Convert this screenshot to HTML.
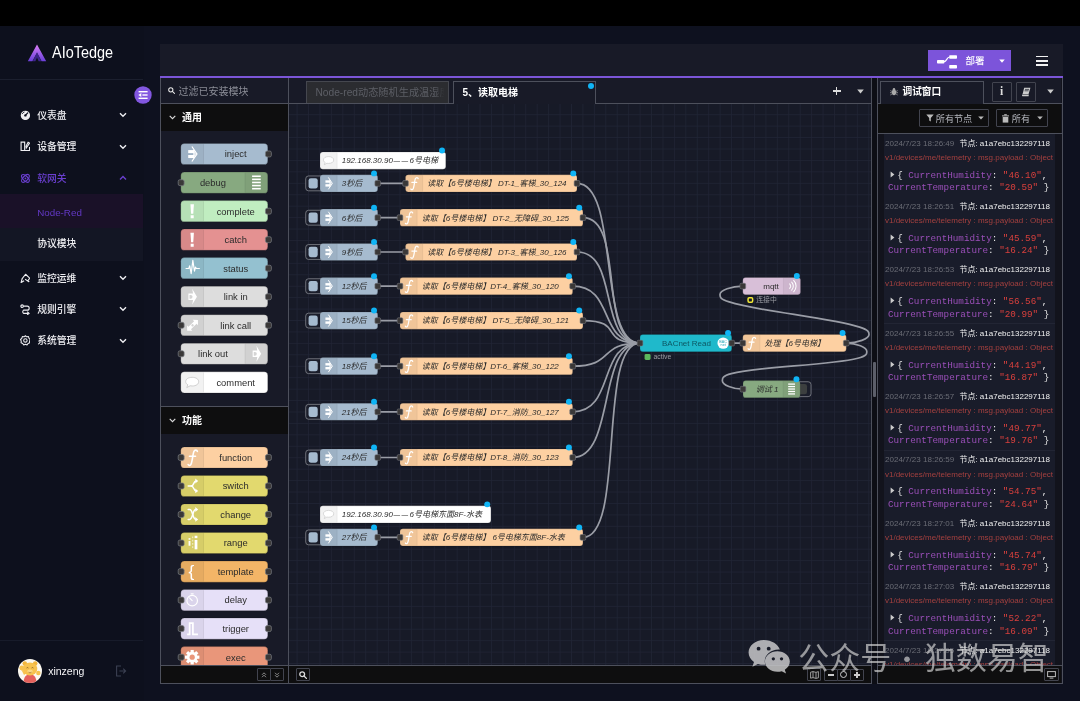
<!DOCTYPE html><html lang="zh"><head><meta charset="utf-8"><title>AIoTedge - Node-Red</title>
<style>
html,body{margin:0;padding:0}
body{width:1080px;height:701px;overflow:hidden;position:relative;background:#0e111f;font-family:"Liberation Sans","Noto Sans CJK SC",sans-serif;color:#fff}
.a{position:absolute}
.menu{position:absolute;left:0;width:143px;height:31px;font-size:9.8px;font-weight:500;color:#f1f1f4}
.menu span{position:absolute;left:37.2px;top:50%;margin-top:0.8px;transform:translateY(-50%);white-space:nowrap;line-height:14px}
.menu svg.ic{position:absolute;left:19.7px;top:50%;margin-top:-5.4px;width:10.8px;height:10.8px}
.menu svg.ch{position:absolute;left:119px;top:50%;margin-top:-3px}
.bd{background:#4d505c}
.cat{position:absolute;left:161px;width:127px;height:27px;background:#0e0e0f;font-size:10px;font-weight:700;color:#fff}
.cat span{position:absolute;left:21px;top:50%;margin-top:0.6px;transform:translateY(-50%);line-height:14px}
.msg{position:absolute;left:884px;width:171px;height:63px;background:#191c2a;font-size:8px;white-space:nowrap;overflow:hidden}
.msg .t{position:absolute;left:1px;top:4.9px;color:#6b6d76;line-height:10px;letter-spacing:0.02px}
.msg .n{position:absolute;right:5px;top:4.9px;color:#f0f0f0;line-height:10px}
.msg .p{position:absolute;left:1px;top:19.1px;color:#a4403f;line-height:10px}
.msg .l1{position:absolute;left:5.6px;top:35.9px;font-family:"Liberation Mono","DejaVu Sans Mono",monospace;font-size:9.27px;line-height:12px;color:#e9e9e9}
.msg .l2{position:absolute;left:4px;top:48.2px;font-family:"Liberation Mono","DejaVu Sans Mono",monospace;font-size:9.27px;line-height:12px;color:#e9e9e9}
.k{color:#9a4fb8}.s{color:#d9403d}
.btn{position:absolute;border:1px solid #42444f;box-sizing:border-box;border-radius:1px}
</style></head><body><div class="a" style="left:0;top:0;width:1080px;height:701px;overflow:hidden;will-change:transform">
<div class="a" style="left:0;top:0;width:1080px;height:26px;background:#000"></div>
<div class="a" style="left:0;top:26px;width:144px;height:675px;background:#0d101d"></div>
<svg class="a" style="left:27px;top:44px" width="20" height="18" viewBox="0 0 20 18"><defs><linearGradient id="lg" x1="0" y1="0" x2="0" y2="1"><stop offset="0" stop-color="#dd7ff5"/><stop offset="0.55" stop-color="#9a5be8"/><stop offset="1" stop-color="#6a3fd8"/></linearGradient></defs><path d="M10 0.5 L19.2 17.2 H14.6 L10 8.6 L5.4 17.2 H0.8 Z" fill="url(#lg)"/><path d="M10 8.2 L14.2 17.2 H11.6 L10 13.6 L8.4 17.2 H5.8 Z" fill="#4d2bb0" opacity="0.75"/></svg>
<div class="a" style="left:52.4px;top:42.6px;font-size:15.8px;line-height:20px;color:#fff;transform:scaleX(0.915);transform-origin:0 0">AIoTedge</div>
<div class="a" style="left:0;top:79px;width:143px;height:1px;background:#1b1f2e"></div>
<svg class="a" style="left:133.5px;top:86px" width="18" height="18" viewBox="0 0 18 18"><circle cx="9" cy="9" r="8.7" fill="#8257e0"/><g fill="#fff"><rect x="4.6" y="5" width="9" height="1.4"/><rect x="8.4" y="8.3" width="5.2" height="1.4"/><rect x="4.6" y="11.6" width="9" height="1.4"/><path d="M4.3 9 l3 -1.9 v3.8 z"/></g></svg>
<div class="a" style="left:0;top:194px;width:143px;height:34px;background:#1a1128"></div>
<div class="a" style="left:0;top:228px;width:143px;height:33px;background:#131624"></div>
<div class="a" style="left:37.2px;top:205.8px;font-size:9.8px;line-height:14px;font-weight:500;color:#6238c4">Node-Red</div>
<div class="a" style="left:37.2px;top:237.3px;font-size:9.8px;line-height:14px;font-weight:500;color:#f1f1f4">协议模块</div>
<div class="menu" style="top:99.5px;color:#eeeef2"><svg class="ic" width="12" height="12" viewBox="0 0 12 12"><circle cx="6" cy="6" r="5.2" fill="#eeeef2"/><path d="M6 6 L8.6 3.2" stroke="#0d101e" stroke-width="1.4" stroke-linecap="round"/><circle cx="6" cy="6" r="1.3" fill="#0d101e"/><path d="M2.3 4.5 A4 4 0 0 1 5 2.2" fill="none" stroke="#0d101e" stroke-width="0.9"/></svg><span>仪表盘</span><svg class="ch" width="8" height="6" viewBox="0 0 8 6"><path d="M1 1.2 L4 4.2 L7 1.2" fill="none" stroke="#eeeef2" stroke-width="1.4"/></svg></div>
<div class="menu" style="top:131.0px;color:#eeeef2"><svg class="ic" width="12" height="12" viewBox="0 0 12 12" fill="none" stroke="#eeeef2" stroke-width="1.25"><path d="M5.2 1.2 H1.2 V10.6 H5.2 M5.2 0.6 V11.2"/><path d="M5.2 10.6 H10.6 V6.8 M7 7.8 L10.6 2.4 L9 1.4 L6.6 5.8 Z"/></svg><span>设备管理</span><svg class="ch" width="8" height="6" viewBox="0 0 8 6"><path d="M1 1.2 L4 4.2 L7 1.2" fill="none" stroke="#eeeef2" stroke-width="1.4"/></svg></div>
<div class="menu" style="top:162.5px;color:#6a3fd0"><svg class="ic" width="12" height="12" viewBox="0 0 12 12" fill="none" stroke="#6a3fd0" stroke-width="1.2"><ellipse cx="6" cy="6" rx="5.4" ry="2.6" transform="rotate(45 6 6)"/><ellipse cx="6" cy="6" rx="5.4" ry="2.6" transform="rotate(-45 6 6)"/><circle cx="6" cy="6" r="1" fill="#6a3fd0" stroke="none"/></svg><span>软网关</span><svg class="ch" width="8" height="6" viewBox="0 0 8 6"><path d="M1 4.6 L4 1.6 L7 4.6" fill="none" stroke="#6a3fd0" stroke-width="1.4"/></svg></div>
<div class="menu" style="top:262.5px;color:#eeeef2"><svg class="ic" width="12" height="12" viewBox="0 0 12 12" fill="none" stroke="#eeeef2" stroke-width="1.25" stroke-linejoin="round"><path d="M2.2 6.5 L6.2 1.4 L10.8 5.8 L8.6 8.8 L5.6 6.8"/><path d="M2.4 6.2 L1.2 10.6 L4.6 8.6"/><circle cx="9.6" cy="9.4" r="0.9" fill="#eeeef2" stroke="none"/></svg><span>监控运维</span><svg class="ch" width="8" height="6" viewBox="0 0 8 6"><path d="M1 1.2 L4 4.2 L7 1.2" fill="none" stroke="#eeeef2" stroke-width="1.4"/></svg></div>
<div class="menu" style="top:293.8px;color:#eeeef2"><svg class="ic" width="12" height="12" viewBox="0 0 12 12" fill="none" stroke="#eeeef2" stroke-width="1.25"><circle cx="2.4" cy="2.4" r="1.4"/><path d="M4 2.4 H8 A2.2 2.2 0 0 1 8 6.8 H4 A2.2 2.2 0 0 0 4 10.4 H9"/><path d="M8 8.6 L10.2 10.4 L8 12" stroke-linejoin="round"/></svg><span>规则引擎</span><svg class="ch" width="8" height="6" viewBox="0 0 8 6"><path d="M1 1.2 L4 4.2 L7 1.2" fill="none" stroke="#eeeef2" stroke-width="1.4"/></svg></div>
<div class="menu" style="top:325.2px;color:#eeeef2"><svg class="ic" width="12" height="12" viewBox="0 0 12 12" fill="none" stroke="#eeeef2" stroke-width="1.2"><circle cx="6" cy="6" r="1.9"/><path d="M6 0.8 L7.4 2 L9.4 1.8 L10 3.7 L11.4 5 L10.6 6.8 L10.8 8.6 L9 9.4 L7.8 11 L6 10.4 L4.2 11 L3 9.4 L1.2 8.6 L1.4 6.8 L0.6 5 L2 3.7 L2.6 1.8 L4.6 2 Z" stroke-linejoin="round"/></svg><span>系统管理</span><svg class="ch" width="8" height="6" viewBox="0 0 8 6"><path d="M1 1.2 L4 4.2 L7 1.2" fill="none" stroke="#eeeef2" stroke-width="1.4"/></svg></div>
<div class="a" style="left:0;top:639.5px;width:143px;height:1px;background:#171b2a"></div>
<svg class="a" style="left:18px;top:658.5px" width="24" height="24" viewBox="0 0 24 24"><defs><clipPath id="av"><circle cx="12" cy="12" r="12"/></clipPath></defs><g clip-path="url(#av)"><rect width="24" height="24" fill="#fbf8f0"/><path d="M5.500 24 C5.500 18 8 15.500 12 15.500 S18.500 18 18.500 24 Z" fill="#e5615c"/><circle cx="6.800" cy="4.600" r="2.300" fill="#f2b53c"/><circle cx="17.200" cy="4.600" r="2.300" fill="#f2b53c"/><ellipse cx="12" cy="10" rx="7.300" ry="6.500" fill="#f7c24e"/><circle cx="3.800" cy="9" r="2.400" fill="#f7c24e"/><path d="M3 10 L6 16 L8.500 14 Z" fill="#f7c24e"/><circle cx="20.300" cy="14" r="2.200" fill="#f7c24e"/><ellipse cx="12" cy="12.300" rx="2.800" ry="1.700" fill="#fbd983"/><path d="M10.500 13.200 Q12 14.600 13.500 13.200" stroke="#7a4a1a" stroke-width="0.500" fill="none"/><path d="M8.600 9 q0.900 -0.900 1.800 0 M13.600 9 q0.900 -0.900 1.800 0" stroke="#5a3a15" stroke-width="0.600" fill="none"/></g></svg>
<div class="a" style="left:48.2px;top:663.6px;font-size:10.5px;line-height:14px;color:#f4f4f6">xinzeng</div>
<svg class="a" style="left:115px;top:664.5px" width="12" height="12" viewBox="0 0 12 12" fill="none" stroke="#3b4052" stroke-width="1.1"><path d="M6 1 H1.6 V11 H6"/><path d="M4.4 6 H10.4 M8.2 3.6 L10.6 6 L8.2 8.4"/></svg>
<div class="a" style="left:160px;top:44px;width:902.5px;height:640px;background:#181a27"></div>
<div class="a" style="left:160px;top:76.2px;width:902.5px;height:2.2px;background:#7b55d8"></div>
<div class="a" style="left:928.2px;top:50px;width:82.6px;height:21.2px;background:#7c54da"></div>
<svg class="a" style="left:935.8px;top:52.9px" width="24" height="18" viewBox="0 0 24 18" fill="#fff"><rect x="1" y="6.9" width="7.4" height="3.6" rx="0.8"/><rect x="13.2" y="2.2" width="7.8" height="3.6" rx="0.8"/><rect x="13.2" y="12" width="7.8" height="3.6" rx="0.8"/><path d="M8 8.7 C11 8.7 10.5 4 13.6 4" stroke="#fff" stroke-width="1.2" fill="none"/><path d="M8 8.7 C11 8.7 10.5 13.8 13.6 13.8" stroke="#fff" stroke-width="1.2" fill="none" opacity="0"/></svg>
<div class="a" style="left:965.5px;top:53.6px;font-size:9.5px;line-height:14px;color:#fff;font-weight:500">部署</div>
<svg class="a" style="left:999.2px;top:58.8px" width="6" height="4.2" viewBox="0 0 7 5"><path d="M0.2 0.6 H6.8 L3.5 4.4 Z" fill="#fff"/></svg>
<div class="a" style="left:1035.8px;top:55.6px;width:12.4px;height:1.7px;background:#f2f2f2"></div>
<div class="a" style="left:1035.8px;top:60.0px;width:12.4px;height:1.7px;background:#f2f2f2"></div>
<div class="a" style="left:1035.8px;top:64.4px;width:12.4px;height:1.7px;background:#f2f2f2"></div>
<div class="a bd" style="left:160px;top:78px;width:1px;height:606px"></div>
<div class="a bd" style="left:288px;top:78px;width:1px;height:606px"></div>
<div class="a bd" style="left:160px;top:683px;width:711px;height:1px"></div>
<div class="a bd" style="left:160px;top:103px;width:129px;height:1px"></div>
<svg class="a" style="left:168.4px;top:87.2px" width="7" height="7" viewBox="0 0 8 8" fill="none" stroke="#e8e8e8" stroke-width="1.2"><circle cx="3.2" cy="3.2" r="2.4"/><path d="M5 5 L7.4 7.4" stroke-linecap="round"/></svg>
<div class="a" style="left:178.6px;top:84.6px;font-size:10px;line-height:14px;color:#8b8d97">过滤已安装模块</div>
<div class="cat" style="top:103.5px"><svg class="a" style="left:8px;top:11px" width="7" height="5" viewBox="0 0 7 5"><path d="M0.7 0.8 L3.5 3.6 L6.3 0.8" fill="none" stroke="#ddd" stroke-width="1.1"/></svg><span>通用</span></div>
<div class="a bd" style="left:161px;top:406px;width:127px;height:1px"></div>
<div class="cat" style="top:406.5px"><svg class="a" style="left:8px;top:11px" width="7" height="5" viewBox="0 0 7 5"><path d="M0.7 0.8 L3.5 3.6 L6.3 0.8" fill="none" stroke="#ddd" stroke-width="1.1"/></svg><span>功能</span></div>
<svg class="a" style="left:161px;top:131px" width="127" height="534" viewBox="161 131 127 534">
<g transform="translate(180.80,143.40) scale(0.7225)"><rect x="0" y="0" width="120.4" height="29.3" rx="5" fill="#a6bbcf" stroke="rgba(0,0,0,0.25)" stroke-width="1"/><path d="M5 0.5 h26.5 v28.3 h-26.5 a4.5 4.5 0 0 1 -4.5 -4.5 v-19.3 a4.5 4.5 0 0 1 4.5 -4.5 z" fill="rgba(0,0,0,0.05)"/><path d="M31.5 1 v27.3" stroke="rgba(0,0,0,0.1)" stroke-width="1"/><g transform="translate(0.75,0)"><g transform="translate(0,-0.34999999999999964)"><rect x="9.5" y="9.6" width="8.6" height="4.2" fill="#fff"/><rect x="9.5" y="16.4" width="8.6" height="4.2" fill="#fff"/><path d="M14.6 4.6 L21.6 15 L14.6 25.4" fill="none" stroke="#fff" stroke-width="1.7"/><path d="M16.2 8.2 L20.6 15 L16.2 21.8 Z" fill="#fff" opacity="0.75"/></g></g><text x="76.0" y="19.33" text-anchor="middle" font-family=""Liberation Sans","Noto Sans CJK SC",sans-serif" font-size="13" fill="#2b2b2b">inject</text><rect x="117.20000000000002" y="10.55" width="8.2" height="8.2" rx="2.3" fill="#3a3838" stroke="#777a80" stroke-width="1"/></g>
<g transform="translate(180.80,172.10) scale(0.7225)"><rect x="0" y="0" width="120.4" height="29.3" rx="5" fill="#87a980" stroke="rgba(0,0,0,0.25)" stroke-width="1"/><path d="M88.9 0.5 h26.5 a4.5 4.5 0 0 1 4.5 4.5 v19.3 a4.5 4.5 0 0 1 -4.5 4.5 h-26.5 z" fill="rgba(0,0,0,0.05)"/><path d="M88.9 1 v27.3" stroke="rgba(0,0,0,0.1)" stroke-width="1"/><g transform="translate(89.65,0)"><rect x="9" y="4.65" width="12" height="2.2" fill="#fff"/><rect x="9" y="8.95" width="12" height="2.2" fill="#fff"/><rect x="9" y="13.25" width="12" height="2.2" fill="#fff"/><rect x="9" y="17.55" width="12" height="2.2" fill="#fff"/><rect x="9" y="21.85" width="12" height="2.2" fill="#fff"/></g><text x="44.5" y="19.33" text-anchor="middle" font-family=""Liberation Sans","Noto Sans CJK SC",sans-serif" font-size="13" fill="#2b2b2b">debug</text><rect x="-3.5999999999999996" y="10.55" width="8.2" height="8.2" rx="2.3" fill="#3a3838" stroke="#777a80" stroke-width="1"/></g>
<g transform="translate(180.80,200.60) scale(0.7225)"><rect x="0" y="0" width="120.4" height="29.3" rx="5" fill="#c0edc0" stroke="rgba(0,0,0,0.25)" stroke-width="1"/><path d="M5 0.5 h26.5 v28.3 h-26.5 a4.5 4.5 0 0 1 -4.5 -4.5 v-19.3 a4.5 4.5 0 0 1 4.5 -4.5 z" fill="rgba(0,0,0,0.05)"/><path d="M31.5 1 v27.3" stroke="rgba(0,0,0,0.1)" stroke-width="1"/><g transform="translate(0.75,0)"><g transform="translate(0,-0.34999999999999964)"><path d="M12.6 5.5 h4.8 l-0.9 13 h-3 z" fill="#fff"/><rect x="12.9" y="20.6" width="4.2" height="4.2" fill="#fff"/></g></g><text x="76.0" y="19.33" text-anchor="middle" font-family=""Liberation Sans","Noto Sans CJK SC",sans-serif" font-size="13" fill="#2b2b2b">complete</text><rect x="117.20000000000002" y="10.55" width="8.2" height="8.2" rx="2.3" fill="#3a3838" stroke="#777a80" stroke-width="1"/></g>
<g transform="translate(180.80,229.10) scale(0.7225)"><rect x="0" y="0" width="120.4" height="29.3" rx="5" fill="#e49191" stroke="rgba(0,0,0,0.25)" stroke-width="1"/><path d="M5 0.5 h26.5 v28.3 h-26.5 a4.5 4.5 0 0 1 -4.5 -4.5 v-19.3 a4.5 4.5 0 0 1 4.5 -4.5 z" fill="rgba(0,0,0,0.05)"/><path d="M31.5 1 v27.3" stroke="rgba(0,0,0,0.1)" stroke-width="1"/><g transform="translate(0.75,0)"><g transform="translate(0,-0.34999999999999964)"><path d="M12.6 5.5 h4.8 l-0.9 13 h-3 z" fill="#fff"/><rect x="12.9" y="20.6" width="4.2" height="4.2" fill="#fff"/></g></g><text x="76.0" y="19.33" text-anchor="middle" font-family=""Liberation Sans","Noto Sans CJK SC",sans-serif" font-size="13" fill="#2b2b2b">catch</text><rect x="117.20000000000002" y="10.55" width="8.2" height="8.2" rx="2.3" fill="#3a3838" stroke="#777a80" stroke-width="1"/></g>
<g transform="translate(180.80,257.60) scale(0.7225)"><rect x="0" y="0" width="120.4" height="29.3" rx="5" fill="#94c1d0" stroke="rgba(0,0,0,0.25)" stroke-width="1"/><path d="M5 0.5 h26.5 v28.3 h-26.5 a4.5 4.5 0 0 1 -4.5 -4.5 v-19.3 a4.5 4.5 0 0 1 4.5 -4.5 z" fill="rgba(0,0,0,0.05)"/><path d="M31.5 1 v27.3" stroke="rgba(0,0,0,0.1)" stroke-width="1"/><g transform="translate(0.75,0)"><g transform="translate(0,-0.34999999999999964)"><path d="M6.500 15.500 h3.800 l1.300 -3.800 l2 11 l2.300 -18.500 l2.300 14.800 l1.400 -5.500 l1.100 2 h4.300" fill="none" stroke="#fff" stroke-width="1.600" stroke-linejoin="round" stroke-linecap="round"/></g></g><text x="76.0" y="19.33" text-anchor="middle" font-family=""Liberation Sans","Noto Sans CJK SC",sans-serif" font-size="13" fill="#2b2b2b">status</text><rect x="117.20000000000002" y="10.55" width="8.2" height="8.2" rx="2.3" fill="#3a3838" stroke="#777a80" stroke-width="1"/></g>
<g transform="translate(180.80,286.20) scale(0.7225)"><rect x="0" y="0" width="120.4" height="29.3" rx="5" fill="#ddd" stroke="rgba(0,0,0,0.25)" stroke-width="1"/><path d="M5 0.5 h26.5 v28.3 h-26.5 a4.5 4.5 0 0 1 -4.5 -4.5 v-19.3 a4.5 4.5 0 0 1 4.5 -4.5 z" fill="rgba(0,0,0,0.05)"/><path d="M31.5 1 v27.3" stroke="rgba(0,0,0,0.1)" stroke-width="1"/><g transform="translate(0.75,0)"><g transform="translate(0,-0.34999999999999964)"><path d="M9.8 10.4 h6.4 l-1.2 -6.4 l6.6 11 l-6.6 11 l1.2 -6.400 h-6.400 z" fill="#fff"/><path d="M11.3 12.4 h1.600 a2.600 2.600 0 0 1 0 5.200 h-1.600 z" fill="#d4d4d4"/></g></g><text x="76.0" y="19.33" text-anchor="middle" font-family=""Liberation Sans","Noto Sans CJK SC",sans-serif" font-size="13" fill="#2b2b2b">link in</text><rect x="117.20000000000002" y="10.55" width="8.2" height="8.2" rx="2.3" fill="#3a3838" stroke="#777a80" stroke-width="1"/></g>
<g transform="translate(180.80,314.70) scale(0.7225)"><rect x="0" y="0" width="120.4" height="29.3" rx="5" fill="#ddd" stroke="rgba(0,0,0,0.25)" stroke-width="1"/><path d="M5 0.5 h26.5 v28.3 h-26.5 a4.5 4.5 0 0 1 -4.5 -4.5 v-19.3 a4.5 4.5 0 0 1 4.5 -4.5 z" fill="rgba(0,0,0,0.05)"/><path d="M31.5 1 v27.3" stroke="rgba(0,0,0,0.1)" stroke-width="1"/><g transform="translate(0.75,0)"><g transform="translate(15.5,14.65) rotate(-45)"><path d="M-10.5 0 l5 -5.200 v2.800 h11 v-2.800 l5 5.200 l-5 5.200 v-2.800 h-11 v2.800 z" fill="#fff"/><circle r="1.700" fill="#d4d4d4"/></g></g><text x="76.0" y="19.33" text-anchor="middle" font-family=""Liberation Sans","Noto Sans CJK SC",sans-serif" font-size="13" fill="#2b2b2b">link call</text><rect x="-3.5999999999999996" y="10.55" width="8.2" height="8.2" rx="2.3" fill="#3a3838" stroke="#777a80" stroke-width="1"/><rect x="117.20000000000002" y="10.55" width="8.2" height="8.2" rx="2.3" fill="#3a3838" stroke="#777a80" stroke-width="1"/></g>
<g transform="translate(180.80,343.20) scale(0.7225)"><rect x="0" y="0" width="120.4" height="29.3" rx="5" fill="#ddd" stroke="rgba(0,0,0,0.25)" stroke-width="1"/><path d="M88.9 0.5 h26.5 a4.5 4.5 0 0 1 4.5 4.5 v19.3 a4.5 4.5 0 0 1 -4.5 4.5 h-26.5 z" fill="rgba(0,0,0,0.05)"/><path d="M88.9 1 v27.3" stroke="rgba(0,0,0,0.1)" stroke-width="1"/><g transform="translate(89.65,0)"><g transform="translate(0,-0.34999999999999964)"><path d="M9.8 10.4 h6.4 l-1.2 -6.4 l6.6 11 l-6.6 11 l1.2 -6.400 h-6.400 z" fill="#fff"/><path d="M11.3 12.4 h1.600 a2.600 2.600 0 0 1 0 5.200 h-1.600 z" fill="#d4d4d4"/></g></g><text x="44.5" y="19.33" text-anchor="middle" font-family=""Liberation Sans","Noto Sans CJK SC",sans-serif" font-size="13" fill="#2b2b2b">link out</text><rect x="-3.5999999999999996" y="10.55" width="8.2" height="8.2" rx="2.3" fill="#3a3838" stroke="#777a80" stroke-width="1"/></g>
<g transform="translate(180.80,371.80) scale(0.7225)"><rect x="0" y="0" width="120.4" height="29.3" rx="5" fill="#ffffff" stroke="rgba(0,0,0,0.25)" stroke-width="1"/><path d="M5 0.5 h26.5 v28.3 h-26.5 a4.5 4.5 0 0 1 -4.5 -4.5 v-19.3 a4.5 4.5 0 0 1 4.5 -4.5 z" fill="rgba(0,0,0,0.05)"/><path d="M31.5 1 v27.3" stroke="rgba(0,0,0,0.1)" stroke-width="1"/><g transform="translate(0.75,0)"><g transform="translate(0,-0.34999999999999964)"><path d="M15 8 c5.5 0 9 2.6 9 6 s-3.5 6 -9 6 c-1 0 -2 -0.1 -2.9 -0.3 l-4.6 2.6 l1.5 -4 c-1.9 -1.1 -3 -2.6 -3 -4.3 c0 -3.4 3.5 -6 9 -6 z" fill="#fff" stroke="#c9c9c9" stroke-width="1.2"/></g></g><text x="76.0" y="19.33" text-anchor="middle" font-family=""Liberation Sans","Noto Sans CJK SC",sans-serif" font-size="13" fill="#2b2b2b">comment</text></g>
<g transform="translate(180.80,446.90) scale(0.7225)"><rect x="0" y="0" width="120.4" height="29.3" rx="5" fill="#fdd0a2" stroke="rgba(0,0,0,0.25)" stroke-width="1"/><path d="M5 0.5 h26.5 v28.3 h-26.5 a4.5 4.5 0 0 1 -4.5 -4.5 v-19.3 a4.5 4.5 0 0 1 4.5 -4.5 z" fill="rgba(0,0,0,0.05)"/><path d="M31.5 1 v27.3" stroke="rgba(0,0,0,0.1)" stroke-width="1"/><g transform="translate(0.75,0)"><g transform="translate(0,-0.34999999999999964)" fill="none" stroke="#fff" stroke-width="2.2" stroke-linecap="round"><path d="M22.2 6.6 c-0.4 -2.2 -3.8 -2.6 -5 0.4 c-0.9 2.300 -1.300 6.400 -2.100 10.800 c-0.600 3.500 -1 6.200 -2.300 7.500 c-1.300 1.200 -2.900 0.700 -3.400 -0.500"/><path d="M11.2 13.4 h8.400"/></g></g><text x="76.0" y="19.33" text-anchor="middle" font-family=""Liberation Sans","Noto Sans CJK SC",sans-serif" font-size="13" fill="#2b2b2b">function</text><rect x="-3.5999999999999996" y="10.55" width="8.2" height="8.2" rx="2.3" fill="#3a3838" stroke="#777a80" stroke-width="1"/><rect x="117.20000000000002" y="10.55" width="8.2" height="8.2" rx="2.3" fill="#3a3838" stroke="#777a80" stroke-width="1"/></g>
<g transform="translate(180.80,475.40) scale(0.7225)"><rect x="0" y="0" width="120.4" height="29.3" rx="5" fill="#e2d96e" stroke="rgba(0,0,0,0.25)" stroke-width="1"/><path d="M5 0.5 h26.5 v28.3 h-26.5 a4.5 4.5 0 0 1 -4.5 -4.5 v-19.3 a4.5 4.5 0 0 1 4.5 -4.5 z" fill="rgba(0,0,0,0.05)"/><path d="M31.5 1 v27.3" stroke="rgba(0,0,0,0.1)" stroke-width="1"/><g transform="translate(0.75,0)"><g transform="translate(0,-0.34999999999999964)" fill="none" stroke="#fff" stroke-width="2.1" stroke-linecap="round"><path d="M9.5 15 h4.500"/><path d="M14 15 c3.500 0 2.500 -6.800 6.500 -6.800"/><path d="M14 15 c3.500 0 2.500 6.800 6.500 6.800"/><path d="M19.300 4.800 l4 3.400 l-4 3.400 z" fill="#fff" stroke="none"/><path d="M19.300 18.400 l4 3.400 l-4 3.400 z" fill="#fff" stroke="none"/></g></g><text x="76.0" y="19.33" text-anchor="middle" font-family=""Liberation Sans","Noto Sans CJK SC",sans-serif" font-size="13" fill="#2b2b2b">switch</text><rect x="-3.5999999999999996" y="10.55" width="8.2" height="8.2" rx="2.3" fill="#3a3838" stroke="#777a80" stroke-width="1"/><rect x="117.20000000000002" y="10.55" width="8.2" height="8.2" rx="2.3" fill="#3a3838" stroke="#777a80" stroke-width="1"/></g>
<g transform="translate(180.80,503.90) scale(0.7225)"><rect x="0" y="0" width="120.4" height="29.3" rx="5" fill="#e2d96e" stroke="rgba(0,0,0,0.25)" stroke-width="1"/><path d="M5 0.5 h26.5 v28.3 h-26.5 a4.5 4.5 0 0 1 -4.5 -4.5 v-19.3 a4.5 4.5 0 0 1 4.5 -4.5 z" fill="rgba(0,0,0,0.05)"/><path d="M31.5 1 v27.3" stroke="rgba(0,0,0,0.1)" stroke-width="1"/><g transform="translate(0.75,0)"><g transform="translate(0,-0.34999999999999964)" fill="none" stroke="#fff" stroke-width="2.100" stroke-linecap="round"><path d="M9.500 8.200 h2 c4.500 0 4 13.600 8.500 13.600"/><path d="M9.500 21.800 h2 c4.500 0 4 -13.600 8.500 -13.600"/><path d="M19.300 4.800 l4 3.400 l-4 3.400 z" fill="#fff" stroke="none"/><path d="M19.300 18.400 l4 3.400 l-4 3.400 z" fill="#fff" stroke="none"/></g></g><text x="76.0" y="19.33" text-anchor="middle" font-family=""Liberation Sans","Noto Sans CJK SC",sans-serif" font-size="13" fill="#2b2b2b">change</text><rect x="-3.5999999999999996" y="10.55" width="8.2" height="8.2" rx="2.3" fill="#3a3838" stroke="#777a80" stroke-width="1"/><rect x="117.20000000000002" y="10.55" width="8.2" height="8.2" rx="2.3" fill="#3a3838" stroke="#777a80" stroke-width="1"/></g>
<g transform="translate(180.80,532.40) scale(0.7225)"><rect x="0" y="0" width="120.4" height="29.3" rx="5" fill="#e2d96e" stroke="rgba(0,0,0,0.25)" stroke-width="1"/><path d="M5 0.5 h26.5 v28.3 h-26.5 a4.5 4.5 0 0 1 -4.5 -4.5 v-19.3 a4.5 4.5 0 0 1 4.5 -4.5 z" fill="rgba(0,0,0,0.05)"/><path d="M31.5 1 v27.3" stroke="rgba(0,0,0,0.1)" stroke-width="1"/><g transform="translate(0.75,0)"><g transform="translate(0,-0.34999999999999964)" fill="#fff"><rect x="10" y="8.300" width="2.600" height="2.200"/><rect x="10" y="12.200" width="2.600" height="6.600"/><rect x="15.200" y="6" width="1.200" height="2.400" opacity="0.800"/><rect x="15.200" y="10.500" width="1.200" height="2.400" opacity="0.800"/><rect x="15.200" y="15" width="1.200" height="2.400" opacity="0.800"/><rect x="15.200" y="19.500" width="1.200" height="2.400" opacity="0.800"/><rect x="18.400" y="5" width="3.800" height="3.300"/><rect x="18.400" y="10.800" width="3.800" height="13"/></g></g><text x="76.0" y="19.33" text-anchor="middle" font-family=""Liberation Sans","Noto Sans CJK SC",sans-serif" font-size="13" fill="#2b2b2b">range</text><rect x="-3.5999999999999996" y="10.55" width="8.2" height="8.2" rx="2.3" fill="#3a3838" stroke="#777a80" stroke-width="1"/><rect x="117.20000000000002" y="10.55" width="8.2" height="8.2" rx="2.3" fill="#3a3838" stroke="#777a80" stroke-width="1"/></g>
<g transform="translate(180.80,561.00) scale(0.7225)"><rect x="0" y="0" width="120.4" height="29.3" rx="5" fill="#f3b567" stroke="rgba(0,0,0,0.25)" stroke-width="1"/><path d="M5 0.5 h26.5 v28.3 h-26.5 a4.5 4.5 0 0 1 -4.5 -4.5 v-19.3 a4.5 4.5 0 0 1 4.5 -4.5 z" fill="rgba(0,0,0,0.05)"/><path d="M31.5 1 v27.3" stroke="rgba(0,0,0,0.1)" stroke-width="1"/><g transform="translate(0.75,0)"><text x="14" y="21.65" text-anchor="middle" font-family=""Liberation Sans","Noto Sans CJK SC",sans-serif" font-size="24" fill="#fff">{</text></g><text x="76.0" y="19.33" text-anchor="middle" font-family=""Liberation Sans","Noto Sans CJK SC",sans-serif" font-size="13" fill="#2b2b2b">template</text><rect x="-3.5999999999999996" y="10.55" width="8.2" height="8.2" rx="2.3" fill="#3a3838" stroke="#777a80" stroke-width="1"/><rect x="117.20000000000002" y="10.55" width="8.2" height="8.2" rx="2.3" fill="#3a3838" stroke="#777a80" stroke-width="1"/></g>
<g transform="translate(180.80,589.50) scale(0.7225)"><rect x="0" y="0" width="120.4" height="29.3" rx="5" fill="#e6e0f8" stroke="rgba(0,0,0,0.25)" stroke-width="1"/><path d="M5 0.5 h26.5 v28.3 h-26.5 a4.5 4.5 0 0 1 -4.5 -4.5 v-19.3 a4.5 4.5 0 0 1 4.5 -4.5 z" fill="rgba(0,0,0,0.05)"/><path d="M31.5 1 v27.3" stroke="rgba(0,0,0,0.1)" stroke-width="1"/><g transform="translate(0.75,0)"><g transform="translate(0,-0.34999999999999964)" fill="none" stroke="#fff" stroke-width="1.6"><circle cx="15" cy="15.800" r="7.300"/><path d="M15 15.800 l-3.600 -3.800" stroke-linecap="round"/><path d="M13 6.400 h4" stroke-width="1.600"/></g></g><text x="76.0" y="19.33" text-anchor="middle" font-family=""Liberation Sans","Noto Sans CJK SC",sans-serif" font-size="13" fill="#2b2b2b">delay</text><rect x="-3.5999999999999996" y="10.55" width="8.2" height="8.2" rx="2.3" fill="#3a3838" stroke="#777a80" stroke-width="1"/><rect x="117.20000000000002" y="10.55" width="8.2" height="8.2" rx="2.3" fill="#3a3838" stroke="#777a80" stroke-width="1"/></g>
<g transform="translate(180.80,618.00) scale(0.7225)"><rect x="0" y="0" width="120.4" height="29.3" rx="5" fill="#e6e0f8" stroke="rgba(0,0,0,0.25)" stroke-width="1"/><path d="M5 0.5 h26.5 v28.3 h-26.5 a4.5 4.5 0 0 1 -4.5 -4.5 v-19.3 a4.5 4.5 0 0 1 4.5 -4.5 z" fill="rgba(0,0,0,0.05)"/><path d="M31.5 1 v27.3" stroke="rgba(0,0,0,0.1)" stroke-width="1"/><g transform="translate(0.75,0)"><g transform="translate(0,-0.34999999999999964)" fill="none" stroke="#fff" stroke-width="2.4"><path d="M8 23 h3.500 v-15.500 h4.500 v15.500 h7"/></g></g><text x="76.0" y="19.33" text-anchor="middle" font-family=""Liberation Sans","Noto Sans CJK SC",sans-serif" font-size="13" fill="#2b2b2b">trigger</text><rect x="-3.5999999999999996" y="10.55" width="8.2" height="8.2" rx="2.3" fill="#3a3838" stroke="#777a80" stroke-width="1"/><rect x="117.20000000000002" y="10.55" width="8.2" height="8.2" rx="2.3" fill="#3a3838" stroke="#777a80" stroke-width="1"/></g>
<g transform="translate(180.80,646.60) scale(0.7225)"><rect x="0" y="0" width="120.4" height="29.3" rx="5" fill="#e9967a" stroke="rgba(0,0,0,0.25)" stroke-width="1"/><path d="M5 0.5 h26.5 v28.3 h-26.5 a4.5 4.5 0 0 1 -4.5 -4.5 v-19.3 a4.5 4.5 0 0 1 4.5 -4.5 z" fill="rgba(0,0,0,0.05)"/><path d="M31.5 1 v27.3" stroke="rgba(0,0,0,0.1)" stroke-width="1"/><g transform="translate(0.75,0)"><g transform="translate(15,14.65)"><rect x="-2.2" y="-10" width="4.4" height="20" fill="#fff" transform="rotate(0.0)"/><rect x="-2.2" y="-10" width="4.4" height="20" fill="#fff" transform="rotate(45.0)"/><rect x="-2.2" y="-10" width="4.4" height="20" fill="#fff" transform="rotate(90.0)"/><rect x="-2.2" y="-10" width="4.4" height="20" fill="#fff" transform="rotate(135.0)"/><circle r="7.4" fill="#fff"/><circle r="3.6" fill="#e9967a"/></g></g><text x="76.0" y="19.33" text-anchor="middle" font-family=""Liberation Sans","Noto Sans CJK SC",sans-serif" font-size="13" fill="#2b2b2b">exec</text><rect x="-3.5999999999999996" y="10.55" width="8.2" height="8.2" rx="2.3" fill="#3a3838" stroke="#777a80" stroke-width="1"/><rect x="117.20000000000002" y="10.55" width="8.2" height="8.2" rx="2.3" fill="#3a3838" stroke="#777a80" stroke-width="1"/></g>
</svg>
<div class="a" style="left:161px;top:665px;width:127px;height:18px;background:#0e0e0f"></div>
<div class="a bd" style="left:161px;top:664.5px;width:127px;height:1px"></div>
<div class="btn" style="left:256.5px;top:668px;width:14px;height:13px"></div><div class="btn" style="left:269.5px;top:668px;width:14px;height:13px"></div>
<svg class="a" style="left:260.5px;top:671.5px" width="6" height="6" viewBox="0 0 6 6" fill="none" stroke="#999" stroke-width="0.9"><path d="M1 2.8 L3 0.8 L5 2.8 M1 5.2 L3 3.2 L5 5.2"/></svg>
<svg class="a" style="left:273.5px;top:671.5px" width="6" height="6" viewBox="0 0 6 6" fill="none" stroke="#999" stroke-width="0.9"><path d="M1 0.8 L3 2.8 L5 0.8 M1 3.2 L3 5.2 L5 3.2"/></svg>
<div class="a bd" style="left:289px;top:103px;width:582px;height:1px"></div>
<div class="a" style="left:305.5px;top:80.5px;width:143.5px;height:22.5px;background:#2b2c30;border:1px solid #45474f;border-bottom:none;box-sizing:border-box;overflow:hidden;white-space:nowrap"><span style="position:absolute;left:9px;top:4px;font-size:10.2px;line-height:14px;color:#5d5f66">Node-red动态随机生成温湿度</span><span style="position:absolute;right:0;top:0;width:14px;height:22px;background:linear-gradient(90deg,rgba(43,44,48,0),#2b2c30 75%)"></span></div>
<div class="a" style="left:453px;top:80.5px;width:143px;height:23.5px;background:#181a27;border:1px solid #4d505c;border-bottom:none;box-sizing:border-box"><span style="position:absolute;left:8.5px;top:4px;font-size:10px;line-height:14px;color:#fff;font-weight:700">5、读取电梯</span></div>
<div class="a" style="left:587.8px;top:83px;width:6px;height:6px;border-radius:3px;background:#0fb4f5"></div>
<div class="a" style="left:832.5px;top:90px;width:8px;height:1.6px;background:#ddd"></div><div class="a" style="left:835.7px;top:86.8px;width:1.6px;height:8px;background:#ddd"></div>
<svg class="a" style="left:856.5px;top:89px" width="7" height="5" viewBox="0 0 7 5"><path d="M0.2 0.6 H6.8 L3.5 4.4 Z" fill="#ccc"/></svg>
<svg class="a" style="left:289px;top:104px" width="582" height="561" viewBox="289 104 582 561">
<rect x="289" y="104" width="582" height="561" fill="#171a27"/>
<path d="M297.08 104V665M308.52 104V665M319.95 104V665M331.38 104V665M342.82 104V665M354.25 104V665M365.69 104V665M377.12 104V665M388.55 104V665M399.99 104V665M411.42 104V665M422.86 104V665M434.29 104V665M445.72 104V665M457.16 104V665M468.59 104V665M480.03 104V665M491.46 104V665M502.89 104V665M514.33 104V665M525.76 104V665M537.20 104V665M548.63 104V665M560.06 104V665M571.50 104V665M582.93 104V665M594.37 104V665M605.80 104V665M617.23 104V665M628.67 104V665M640.10 104V665M651.54 104V665M662.97 104V665M674.40 104V665M685.84 104V665M697.27 104V665M708.71 104V665M720.14 104V665M731.57 104V665M743.01 104V665M754.44 104V665M765.88 104V665M777.31 104V665M788.74 104V665M800.18 104V665M811.61 104V665M823.05 104V665M834.48 104V665M845.91 104V665M857.35 104V665M868.78 104V665M289 114.70H871M289 126.13H871M289 137.57H871M289 149.00H871M289 160.44H871M289 171.87H871M289 183.30H871M289 194.74H871M289 206.17H871M289 217.61H871M289 229.04H871M289 240.47H871M289 251.91H871M289 263.34H871M289 274.78H871M289 286.21H871M289 297.64H871M289 309.08H871M289 320.51H871M289 331.95H871M289 343.38H871M289 354.81H871M289 366.25H871M289 377.68H871M289 389.12H871M289 400.55H871M289 411.98H871M289 423.42H871M289 434.85H871M289 446.29H871M289 457.72H871M289 469.15H871M289 480.59H871M289 492.02H871M289 503.46H871M289 514.89H871M289 526.32H871M289 537.76H871M289 549.19H871M289 560.63H871M289 572.06H871M289 583.49H871M289 594.93H871M289 606.36H871M289 617.80H871M289 629.23H871M289 640.66H871M289 652.10H871M289 663.53H871" stroke="#222636" stroke-width="0.8" fill="none"/>
<path d="M 659.73 320.80 C 696.90 320.80 672.12 320.80 709.29 320.80" transform="scale(0.5717)" fill="none" stroke="#9a9da6" stroke-width="3" stroke-linecap="round"/>
<path d="M 1009.29 320.80 C 1084.29 320.80 1044.47 600.14 1119.47 600.14" transform="scale(0.5717)" fill="none" stroke="#9a9da6" stroke-width="3" stroke-linecap="round"/>
<path d="M 659.73 380.79 C 689.68 380.79 669.72 380.79 699.67 380.79" transform="scale(0.5717)" fill="none" stroke="#9a9da6" stroke-width="3" stroke-linecap="round"/>
<path d="M 1019.67 380.79 C 1094.67 380.79 1044.47 600.14 1119.47 600.14" transform="scale(0.5717)" fill="none" stroke="#9a9da6" stroke-width="3" stroke-linecap="round"/>
<path d="M 659.73 440.79 C 696.90 440.79 672.12 440.79 709.29 440.79" transform="scale(0.5717)" fill="none" stroke="#9a9da6" stroke-width="3" stroke-linecap="round"/>
<path d="M 1009.29 440.79 C 1084.29 440.79 1044.47 600.14 1119.47 600.14" transform="scale(0.5717)" fill="none" stroke="#9a9da6" stroke-width="3" stroke-linecap="round"/>
<path d="M 659.73 500.61 C 689.68 500.61 669.72 500.61 699.67 500.61" transform="scale(0.5717)" fill="none" stroke="#9a9da6" stroke-width="3" stroke-linecap="round"/>
<path d="M 1001.67 500.61 C 1076.67 500.61 1044.47 600.14 1119.47 600.14" transform="scale(0.5717)" fill="none" stroke="#9a9da6" stroke-width="3" stroke-linecap="round"/>
<path d="M 659.73 560.78 C 689.68 560.78 669.72 560.78 699.67 560.78" transform="scale(0.5717)" fill="none" stroke="#9a9da6" stroke-width="3" stroke-linecap="round"/>
<path d="M 1019.67 560.78 C 1094.67 560.78 1044.47 600.14 1119.47 600.14" transform="scale(0.5717)" fill="none" stroke="#9a9da6" stroke-width="3" stroke-linecap="round"/>
<path d="M 659.73 640.55 C 689.68 640.55 669.72 640.55 699.67 640.55" transform="scale(0.5717)" fill="none" stroke="#9a9da6" stroke-width="3" stroke-linecap="round"/>
<path d="M 1001.67 640.55 C 1076.67 640.55 1044.47 600.14 1119.47 600.14" transform="scale(0.5717)" fill="none" stroke="#9a9da6" stroke-width="3" stroke-linecap="round"/>
<path d="M 659.73 720.31 C 689.68 720.31 669.72 720.31 699.67 720.31" transform="scale(0.5717)" fill="none" stroke="#9a9da6" stroke-width="3" stroke-linecap="round"/>
<path d="M 1001.67 720.31 C 1076.67 720.31 1044.47 600.14 1119.47 600.14" transform="scale(0.5717)" fill="none" stroke="#9a9da6" stroke-width="3" stroke-linecap="round"/>
<path d="M 659.73 800.24 C 689.68 800.24 669.72 800.24 699.67 800.24" transform="scale(0.5717)" fill="none" stroke="#9a9da6" stroke-width="3" stroke-linecap="round"/>
<path d="M 1001.67 800.24 C 1076.67 800.24 1044.47 600.14 1119.47 600.14" transform="scale(0.5717)" fill="none" stroke="#9a9da6" stroke-width="3" stroke-linecap="round"/>
<path d="M 659.73 940.00 C 689.68 940.00 669.72 940.00 699.67 940.00" transform="scale(0.5717)" fill="none" stroke="#9a9da6" stroke-width="3" stroke-linecap="round"/>
<path d="M 1019.67 940.00 C 1094.67 940.00 1044.47 600.14 1119.47 600.14" transform="scale(0.5717)" fill="none" stroke="#9a9da6" stroke-width="3" stroke-linecap="round"/>
<path d="M 1279.87 600.14 C 1294.43 600.14 1284.72 600.14 1299.28 600.14" transform="scale(0.5717)" fill="none" stroke="#9a9da6" stroke-width="3" stroke-linecap="round"/>
<path d="M 1480.15 600.14 C 1500.12 600.14 1520.09 592.64 1520.09 585.14 S 1520.09 570.14 1389.00 550.00 S 1259.34 522.94 1259.34 515.44 S 1279.31 500.44 1299.28 500.44" transform="scale(0.5717)" fill="none" stroke="#9a9da6" stroke-width="3" stroke-linecap="round"/>
<path d="M 1480.15 600.14 C 1498.21 600.14 1516.27 607.64 1516.27 615.14 S 1516.27 630.14 1389.00 640.00 S 1263.51 658.28 1263.51 665.78 S 1281.57 680.78 1299.63 680.78" transform="scale(0.5717)" fill="none" stroke="#9a9da6" stroke-width="3" stroke-linecap="round"/>
<g transform="translate(320.00,152.00) scale(0.5717)"><rect x="0" y="0" width="220" height="30" rx="5" fill="#ffffff" stroke="rgba(0,0,0,0.25)" stroke-width="1"/><path d="M5 0.5 h25 v29 h-25 a4.5 4.5 0 0 1 -4.5 -4.5 v-20 a4.5 4.5 0 0 1 4.5 -4.5 z" fill="rgba(0,0,0,0.05)"/><path d="M30 1 v28" stroke="rgba(0,0,0,0.1)" stroke-width="1"/><g transform="translate(0.0,0)"><g transform="translate(0,0.0)"><path d="M15 8 c5.5 0 9 2.6 9 6 s-3.5 6 -9 6 c-1 0 -2 -0.1 -2.9 -0.3 l-4.6 2.6 l1.5 -4 c-1.9 -1.1 -3 -2.6 -3 -4.3 c0 -3.4 3.5 -6 9 -6 z" fill="#fff" stroke="#c9c9c9" stroke-width="1.2"/></g></g><text x="38" y="20.04" font-family=""Liberation Sans","Noto Sans CJK SC",sans-serif" font-size="14" fill="#2b2b2b" font-style="italic">192.168.30.90<tspan font-size="11.5" font-weight="700" letter-spacing="2.5" dx="1.2">——</tspan>6号电梯</text><circle cx="213.5" cy="-2.5" r="5.2" fill="#0fb4f5"/></g>
<g transform="translate(320.00,505.80) scale(0.5717)"><rect x="0" y="0" width="299" height="30" rx="5" fill="#ffffff" stroke="rgba(0,0,0,0.25)" stroke-width="1"/><path d="M5 0.5 h25 v29 h-25 a4.5 4.5 0 0 1 -4.5 -4.5 v-20 a4.5 4.5 0 0 1 4.5 -4.5 z" fill="rgba(0,0,0,0.05)"/><path d="M30 1 v28" stroke="rgba(0,0,0,0.1)" stroke-width="1"/><g transform="translate(0.0,0)"><g transform="translate(0,0.0)"><path d="M15 8 c5.5 0 9 2.6 9 6 s-3.5 6 -9 6 c-1 0 -2 -0.1 -2.9 -0.3 l-4.6 2.6 l1.5 -4 c-1.9 -1.1 -3 -2.6 -3 -4.3 c0 -3.4 3.5 -6 9 -6 z" fill="#fff" stroke="#c9c9c9" stroke-width="1.2"/></g></g><text x="38" y="20.04" font-family=""Liberation Sans","Noto Sans CJK SC",sans-serif" font-size="14" fill="#2b2b2b" font-style="italic">192.168.30.90<tspan font-size="11.5" font-weight="700" letter-spacing="2.5" dx="1.2">——</tspan>6号电梯东面8F-水表</text><circle cx="292.5" cy="-2.5" r="5.2" fill="#0fb4f5"/></g>
<g transform="translate(320.00,174.82) scale(0.5717)"><rect x="-25" y="2" width="32" height="26" rx="5" fill="#1b1e2b" stroke="#8b8d94" stroke-width="1.3"/><rect x="-20" y="6" width="16" height="18" rx="4" fill="#a6bbcf"/><rect x="0" y="0" width="101" height="30" rx="5" fill="#a6bbcf" stroke="rgba(0,0,0,0.25)" stroke-width="1"/><path d="M5 0.5 h25 v29 h-25 a4.5 4.5 0 0 1 -4.5 -4.5 v-20 a4.5 4.5 0 0 1 4.5 -4.5 z" fill="rgba(0,0,0,0.05)"/><path d="M30 1 v28" stroke="rgba(0,0,0,0.1)" stroke-width="1"/><g transform="translate(0.0,0)"><g transform="translate(0,0.0)"><rect x="9.5" y="9.6" width="8.6" height="4.2" fill="#fff"/><rect x="9.5" y="16.4" width="8.6" height="4.2" fill="#fff"/><path d="M14.6 4.6 L21.6 15 L14.6 25.4" fill="none" stroke="#fff" stroke-width="1.7"/><path d="M16.2 8.2 L20.6 15 L16.2 21.8 Z" fill="#fff" opacity="0.75"/></g></g><text x="38" y="20.04" font-family=""Liberation Sans","Noto Sans CJK SC",sans-serif" font-size="14" fill="#2b2b2b" font-style="italic">3秒后</text><rect x="96.0" y="10.0" width="10" height="10" rx="2.2" fill="#3a3838" stroke="#777a80" stroke-width="1"/><circle cx="94.5" cy="-2.5" r="5.2" fill="#0fb4f5"/></g>
<g transform="translate(405.50,174.82) scale(0.5717)"><rect x="0" y="0" width="300" height="30" rx="5" fill="#fdd0a2" stroke="rgba(0,0,0,0.25)" stroke-width="1"/><path d="M5 0.5 h25 v29 h-25 a4.5 4.5 0 0 1 -4.5 -4.5 v-20 a4.5 4.5 0 0 1 4.5 -4.5 z" fill="rgba(0,0,0,0.05)"/><path d="M30 1 v28" stroke="rgba(0,0,0,0.1)" stroke-width="1"/><g transform="translate(0.0,0)"><g transform="translate(0,0.0)" fill="none" stroke="#fff" stroke-width="2.2" stroke-linecap="round"><path d="M22.2 6.6 c-0.4 -2.2 -3.8 -2.6 -5 0.4 c-0.9 2.300 -1.300 6.400 -2.100 10.800 c-0.600 3.500 -1 6.200 -2.300 7.500 c-1.300 1.200 -2.900 0.700 -3.400 -0.500"/><path d="M11.2 13.4 h8.400"/></g></g><text x="38" y="20.04" font-family=""Liberation Sans","Noto Sans CJK SC",sans-serif" font-size="14" fill="#2b2b2b" font-style="italic">读取【6号楼电梯】 DT-1_客梯_30_124</text><rect x="-5.0" y="10.0" width="10" height="10" rx="2.2" fill="#3a3838" stroke="#777a80" stroke-width="1"/><rect x="295.0" y="10.0" width="10" height="10" rx="2.2" fill="#3a3838" stroke="#777a80" stroke-width="1"/><circle cx="293.5" cy="-2.5" r="5.2" fill="#0fb4f5"/></g>
<g transform="translate(320.00,209.12) scale(0.5717)"><rect x="-25" y="2" width="32" height="26" rx="5" fill="#1b1e2b" stroke="#8b8d94" stroke-width="1.3"/><rect x="-20" y="6" width="16" height="18" rx="4" fill="#a6bbcf"/><rect x="0" y="0" width="101" height="30" rx="5" fill="#a6bbcf" stroke="rgba(0,0,0,0.25)" stroke-width="1"/><path d="M5 0.5 h25 v29 h-25 a4.5 4.5 0 0 1 -4.5 -4.5 v-20 a4.5 4.5 0 0 1 4.5 -4.5 z" fill="rgba(0,0,0,0.05)"/><path d="M30 1 v28" stroke="rgba(0,0,0,0.1)" stroke-width="1"/><g transform="translate(0.0,0)"><g transform="translate(0,0.0)"><rect x="9.5" y="9.6" width="8.6" height="4.2" fill="#fff"/><rect x="9.5" y="16.4" width="8.6" height="4.2" fill="#fff"/><path d="M14.6 4.6 L21.6 15 L14.6 25.4" fill="none" stroke="#fff" stroke-width="1.7"/><path d="M16.2 8.2 L20.6 15 L16.2 21.8 Z" fill="#fff" opacity="0.75"/></g></g><text x="38" y="20.04" font-family=""Liberation Sans","Noto Sans CJK SC",sans-serif" font-size="14" fill="#2b2b2b" font-style="italic">6秒后</text><rect x="96.0" y="10.0" width="10" height="10" rx="2.2" fill="#3a3838" stroke="#777a80" stroke-width="1"/><circle cx="94.5" cy="-2.5" r="5.2" fill="#0fb4f5"/></g>
<g transform="translate(400.00,209.12) scale(0.5717)"><rect x="0" y="0" width="320" height="30" rx="5" fill="#fdd0a2" stroke="rgba(0,0,0,0.25)" stroke-width="1"/><path d="M5 0.5 h25 v29 h-25 a4.5 4.5 0 0 1 -4.5 -4.5 v-20 a4.5 4.5 0 0 1 4.5 -4.5 z" fill="rgba(0,0,0,0.05)"/><path d="M30 1 v28" stroke="rgba(0,0,0,0.1)" stroke-width="1"/><g transform="translate(0.0,0)"><g transform="translate(0,0.0)" fill="none" stroke="#fff" stroke-width="2.2" stroke-linecap="round"><path d="M22.2 6.6 c-0.4 -2.2 -3.8 -2.6 -5 0.4 c-0.9 2.300 -1.300 6.400 -2.100 10.800 c-0.600 3.500 -1 6.200 -2.300 7.500 c-1.300 1.200 -2.900 0.700 -3.400 -0.500"/><path d="M11.2 13.4 h8.400"/></g></g><text x="38" y="20.04" font-family=""Liberation Sans","Noto Sans CJK SC",sans-serif" font-size="14" fill="#2b2b2b" font-style="italic">读取【6号楼电梯】 DT-2_无障碍_30_125</text><rect x="-5.0" y="10.0" width="10" height="10" rx="2.2" fill="#3a3838" stroke="#777a80" stroke-width="1"/><rect x="315.0" y="10.0" width="10" height="10" rx="2.2" fill="#3a3838" stroke="#777a80" stroke-width="1"/><circle cx="313.5" cy="-2.5" r="5.2" fill="#0fb4f5"/></g>
<g transform="translate(320.00,243.42) scale(0.5717)"><rect x="-25" y="2" width="32" height="26" rx="5" fill="#1b1e2b" stroke="#8b8d94" stroke-width="1.3"/><rect x="-20" y="6" width="16" height="18" rx="4" fill="#a6bbcf"/><rect x="0" y="0" width="101" height="30" rx="5" fill="#a6bbcf" stroke="rgba(0,0,0,0.25)" stroke-width="1"/><path d="M5 0.5 h25 v29 h-25 a4.5 4.5 0 0 1 -4.5 -4.5 v-20 a4.5 4.5 0 0 1 4.5 -4.5 z" fill="rgba(0,0,0,0.05)"/><path d="M30 1 v28" stroke="rgba(0,0,0,0.1)" stroke-width="1"/><g transform="translate(0.0,0)"><g transform="translate(0,0.0)"><rect x="9.5" y="9.6" width="8.6" height="4.2" fill="#fff"/><rect x="9.5" y="16.4" width="8.6" height="4.2" fill="#fff"/><path d="M14.6 4.6 L21.6 15 L14.6 25.4" fill="none" stroke="#fff" stroke-width="1.7"/><path d="M16.2 8.2 L20.6 15 L16.2 21.8 Z" fill="#fff" opacity="0.75"/></g></g><text x="38" y="20.04" font-family=""Liberation Sans","Noto Sans CJK SC",sans-serif" font-size="14" fill="#2b2b2b" font-style="italic">9秒后</text><rect x="96.0" y="10.0" width="10" height="10" rx="2.2" fill="#3a3838" stroke="#777a80" stroke-width="1"/><circle cx="94.5" cy="-2.5" r="5.2" fill="#0fb4f5"/></g>
<g transform="translate(405.50,243.42) scale(0.5717)"><rect x="0" y="0" width="300" height="30" rx="5" fill="#fdd0a2" stroke="rgba(0,0,0,0.25)" stroke-width="1"/><path d="M5 0.5 h25 v29 h-25 a4.5 4.5 0 0 1 -4.5 -4.5 v-20 a4.5 4.5 0 0 1 4.5 -4.5 z" fill="rgba(0,0,0,0.05)"/><path d="M30 1 v28" stroke="rgba(0,0,0,0.1)" stroke-width="1"/><g transform="translate(0.0,0)"><g transform="translate(0,0.0)" fill="none" stroke="#fff" stroke-width="2.2" stroke-linecap="round"><path d="M22.2 6.6 c-0.4 -2.2 -3.8 -2.6 -5 0.4 c-0.9 2.300 -1.300 6.400 -2.100 10.800 c-0.600 3.500 -1 6.200 -2.300 7.500 c-1.300 1.200 -2.900 0.700 -3.400 -0.500"/><path d="M11.2 13.4 h8.400"/></g></g><text x="38" y="20.04" font-family=""Liberation Sans","Noto Sans CJK SC",sans-serif" font-size="14" fill="#2b2b2b" font-style="italic">读取【6号楼电梯】 DT-3_客梯_30_126</text><rect x="-5.0" y="10.0" width="10" height="10" rx="2.2" fill="#3a3838" stroke="#777a80" stroke-width="1"/><rect x="295.0" y="10.0" width="10" height="10" rx="2.2" fill="#3a3838" stroke="#777a80" stroke-width="1"/><circle cx="293.5" cy="-2.5" r="5.2" fill="#0fb4f5"/></g>
<g transform="translate(320.00,277.62) scale(0.5717)"><rect x="-25" y="2" width="32" height="26" rx="5" fill="#1b1e2b" stroke="#8b8d94" stroke-width="1.3"/><rect x="-20" y="6" width="16" height="18" rx="4" fill="#a6bbcf"/><rect x="0" y="0" width="101" height="30" rx="5" fill="#a6bbcf" stroke="rgba(0,0,0,0.25)" stroke-width="1"/><path d="M5 0.5 h25 v29 h-25 a4.5 4.5 0 0 1 -4.5 -4.5 v-20 a4.5 4.5 0 0 1 4.5 -4.5 z" fill="rgba(0,0,0,0.05)"/><path d="M30 1 v28" stroke="rgba(0,0,0,0.1)" stroke-width="1"/><g transform="translate(0.0,0)"><g transform="translate(0,0.0)"><rect x="9.5" y="9.6" width="8.6" height="4.2" fill="#fff"/><rect x="9.5" y="16.4" width="8.6" height="4.2" fill="#fff"/><path d="M14.6 4.6 L21.6 15 L14.6 25.4" fill="none" stroke="#fff" stroke-width="1.7"/><path d="M16.2 8.2 L20.6 15 L16.2 21.8 Z" fill="#fff" opacity="0.75"/></g></g><text x="38" y="20.04" font-family=""Liberation Sans","Noto Sans CJK SC",sans-serif" font-size="14" fill="#2b2b2b" font-style="italic">12秒后</text><rect x="96.0" y="10.0" width="10" height="10" rx="2.2" fill="#3a3838" stroke="#777a80" stroke-width="1"/><circle cx="94.5" cy="-2.5" r="5.2" fill="#0fb4f5"/></g>
<g transform="translate(400.00,277.62) scale(0.5717)"><rect x="0" y="0" width="302" height="30" rx="5" fill="#fdd0a2" stroke="rgba(0,0,0,0.25)" stroke-width="1"/><path d="M5 0.5 h25 v29 h-25 a4.5 4.5 0 0 1 -4.5 -4.5 v-20 a4.5 4.5 0 0 1 4.5 -4.5 z" fill="rgba(0,0,0,0.05)"/><path d="M30 1 v28" stroke="rgba(0,0,0,0.1)" stroke-width="1"/><g transform="translate(0.0,0)"><g transform="translate(0,0.0)" fill="none" stroke="#fff" stroke-width="2.2" stroke-linecap="round"><path d="M22.2 6.6 c-0.4 -2.2 -3.8 -2.6 -5 0.4 c-0.9 2.300 -1.300 6.400 -2.100 10.800 c-0.600 3.500 -1 6.200 -2.300 7.500 c-1.300 1.200 -2.900 0.700 -3.400 -0.500"/><path d="M11.2 13.4 h8.400"/></g></g><text x="38" y="20.04" font-family=""Liberation Sans","Noto Sans CJK SC",sans-serif" font-size="14" fill="#2b2b2b" font-style="italic">读取【6号楼电梯】DT-4_客梯_30_120</text><rect x="-5.0" y="10.0" width="10" height="10" rx="2.2" fill="#3a3838" stroke="#777a80" stroke-width="1"/><rect x="297.0" y="10.0" width="10" height="10" rx="2.2" fill="#3a3838" stroke="#777a80" stroke-width="1"/><circle cx="295.5" cy="-2.5" r="5.2" fill="#0fb4f5"/></g>
<g transform="translate(320.00,312.02) scale(0.5717)"><rect x="-25" y="2" width="32" height="26" rx="5" fill="#1b1e2b" stroke="#8b8d94" stroke-width="1.3"/><rect x="-20" y="6" width="16" height="18" rx="4" fill="#a6bbcf"/><rect x="0" y="0" width="101" height="30" rx="5" fill="#a6bbcf" stroke="rgba(0,0,0,0.25)" stroke-width="1"/><path d="M5 0.5 h25 v29 h-25 a4.5 4.5 0 0 1 -4.5 -4.5 v-20 a4.5 4.5 0 0 1 4.5 -4.5 z" fill="rgba(0,0,0,0.05)"/><path d="M30 1 v28" stroke="rgba(0,0,0,0.1)" stroke-width="1"/><g transform="translate(0.0,0)"><g transform="translate(0,0.0)"><rect x="9.5" y="9.6" width="8.6" height="4.2" fill="#fff"/><rect x="9.5" y="16.4" width="8.6" height="4.2" fill="#fff"/><path d="M14.6 4.6 L21.6 15 L14.6 25.4" fill="none" stroke="#fff" stroke-width="1.7"/><path d="M16.2 8.2 L20.6 15 L16.2 21.8 Z" fill="#fff" opacity="0.75"/></g></g><text x="38" y="20.04" font-family=""Liberation Sans","Noto Sans CJK SC",sans-serif" font-size="14" fill="#2b2b2b" font-style="italic">15秒后</text><rect x="96.0" y="10.0" width="10" height="10" rx="2.2" fill="#3a3838" stroke="#777a80" stroke-width="1"/><circle cx="94.5" cy="-2.5" r="5.2" fill="#0fb4f5"/></g>
<g transform="translate(400.00,312.02) scale(0.5717)"><rect x="0" y="0" width="320" height="30" rx="5" fill="#fdd0a2" stroke="rgba(0,0,0,0.25)" stroke-width="1"/><path d="M5 0.5 h25 v29 h-25 a4.5 4.5 0 0 1 -4.5 -4.5 v-20 a4.5 4.5 0 0 1 4.5 -4.5 z" fill="rgba(0,0,0,0.05)"/><path d="M30 1 v28" stroke="rgba(0,0,0,0.1)" stroke-width="1"/><g transform="translate(0.0,0)"><g transform="translate(0,0.0)" fill="none" stroke="#fff" stroke-width="2.2" stroke-linecap="round"><path d="M22.2 6.6 c-0.4 -2.2 -3.8 -2.6 -5 0.4 c-0.9 2.300 -1.300 6.400 -2.100 10.800 c-0.600 3.500 -1 6.200 -2.300 7.500 c-1.300 1.200 -2.900 0.700 -3.400 -0.500"/><path d="M11.2 13.4 h8.400"/></g></g><text x="38" y="20.04" font-family=""Liberation Sans","Noto Sans CJK SC",sans-serif" font-size="14" fill="#2b2b2b" font-style="italic">读取【6号楼电梯】 DT-5_无障碍_30_121</text><rect x="-5.0" y="10.0" width="10" height="10" rx="2.2" fill="#3a3838" stroke="#777a80" stroke-width="1"/><rect x="315.0" y="10.0" width="10" height="10" rx="2.2" fill="#3a3838" stroke="#777a80" stroke-width="1"/><circle cx="313.5" cy="-2.5" r="5.2" fill="#0fb4f5"/></g>
<g transform="translate(320.00,357.62) scale(0.5717)"><rect x="-25" y="2" width="32" height="26" rx="5" fill="#1b1e2b" stroke="#8b8d94" stroke-width="1.3"/><rect x="-20" y="6" width="16" height="18" rx="4" fill="#a6bbcf"/><rect x="0" y="0" width="101" height="30" rx="5" fill="#a6bbcf" stroke="rgba(0,0,0,0.25)" stroke-width="1"/><path d="M5 0.5 h25 v29 h-25 a4.5 4.5 0 0 1 -4.5 -4.5 v-20 a4.5 4.5 0 0 1 4.5 -4.5 z" fill="rgba(0,0,0,0.05)"/><path d="M30 1 v28" stroke="rgba(0,0,0,0.1)" stroke-width="1"/><g transform="translate(0.0,0)"><g transform="translate(0,0.0)"><rect x="9.5" y="9.6" width="8.6" height="4.2" fill="#fff"/><rect x="9.5" y="16.4" width="8.6" height="4.2" fill="#fff"/><path d="M14.6 4.6 L21.6 15 L14.6 25.4" fill="none" stroke="#fff" stroke-width="1.7"/><path d="M16.2 8.2 L20.6 15 L16.2 21.8 Z" fill="#fff" opacity="0.75"/></g></g><text x="38" y="20.04" font-family=""Liberation Sans","Noto Sans CJK SC",sans-serif" font-size="14" fill="#2b2b2b" font-style="italic">18秒后</text><rect x="96.0" y="10.0" width="10" height="10" rx="2.2" fill="#3a3838" stroke="#777a80" stroke-width="1"/><circle cx="94.5" cy="-2.5" r="5.2" fill="#0fb4f5"/></g>
<g transform="translate(400.00,357.62) scale(0.5717)"><rect x="0" y="0" width="302" height="30" rx="5" fill="#fdd0a2" stroke="rgba(0,0,0,0.25)" stroke-width="1"/><path d="M5 0.5 h25 v29 h-25 a4.5 4.5 0 0 1 -4.5 -4.5 v-20 a4.5 4.5 0 0 1 4.5 -4.5 z" fill="rgba(0,0,0,0.05)"/><path d="M30 1 v28" stroke="rgba(0,0,0,0.1)" stroke-width="1"/><g transform="translate(0.0,0)"><g transform="translate(0,0.0)" fill="none" stroke="#fff" stroke-width="2.2" stroke-linecap="round"><path d="M22.2 6.6 c-0.4 -2.2 -3.8 -2.6 -5 0.4 c-0.9 2.300 -1.300 6.400 -2.100 10.800 c-0.600 3.500 -1 6.200 -2.300 7.500 c-1.300 1.200 -2.900 0.700 -3.400 -0.500"/><path d="M11.2 13.4 h8.400"/></g></g><text x="38" y="20.04" font-family=""Liberation Sans","Noto Sans CJK SC",sans-serif" font-size="14" fill="#2b2b2b" font-style="italic">读取【6号楼电梯】DT-6_客梯_30_122</text><rect x="-5.0" y="10.0" width="10" height="10" rx="2.2" fill="#3a3838" stroke="#777a80" stroke-width="1"/><rect x="297.0" y="10.0" width="10" height="10" rx="2.2" fill="#3a3838" stroke="#777a80" stroke-width="1"/><circle cx="295.5" cy="-2.5" r="5.2" fill="#0fb4f5"/></g>
<g transform="translate(320.00,403.22) scale(0.5717)"><rect x="-25" y="2" width="32" height="26" rx="5" fill="#1b1e2b" stroke="#8b8d94" stroke-width="1.3"/><rect x="-20" y="6" width="16" height="18" rx="4" fill="#a6bbcf"/><rect x="0" y="0" width="101" height="30" rx="5" fill="#a6bbcf" stroke="rgba(0,0,0,0.25)" stroke-width="1"/><path d="M5 0.5 h25 v29 h-25 a4.5 4.5 0 0 1 -4.5 -4.5 v-20 a4.5 4.5 0 0 1 4.5 -4.5 z" fill="rgba(0,0,0,0.05)"/><path d="M30 1 v28" stroke="rgba(0,0,0,0.1)" stroke-width="1"/><g transform="translate(0.0,0)"><g transform="translate(0,0.0)"><rect x="9.5" y="9.6" width="8.6" height="4.2" fill="#fff"/><rect x="9.5" y="16.4" width="8.6" height="4.2" fill="#fff"/><path d="M14.6 4.6 L21.6 15 L14.6 25.4" fill="none" stroke="#fff" stroke-width="1.7"/><path d="M16.2 8.2 L20.6 15 L16.2 21.8 Z" fill="#fff" opacity="0.75"/></g></g><text x="38" y="20.04" font-family=""Liberation Sans","Noto Sans CJK SC",sans-serif" font-size="14" fill="#2b2b2b" font-style="italic">21秒后</text><rect x="96.0" y="10.0" width="10" height="10" rx="2.2" fill="#3a3838" stroke="#777a80" stroke-width="1"/><circle cx="94.5" cy="-2.5" r="5.2" fill="#0fb4f5"/></g>
<g transform="translate(400.00,403.22) scale(0.5717)"><rect x="0" y="0" width="302" height="30" rx="5" fill="#fdd0a2" stroke="rgba(0,0,0,0.25)" stroke-width="1"/><path d="M5 0.5 h25 v29 h-25 a4.5 4.5 0 0 1 -4.5 -4.5 v-20 a4.5 4.5 0 0 1 4.5 -4.5 z" fill="rgba(0,0,0,0.05)"/><path d="M30 1 v28" stroke="rgba(0,0,0,0.1)" stroke-width="1"/><g transform="translate(0.0,0)"><g transform="translate(0,0.0)" fill="none" stroke="#fff" stroke-width="2.2" stroke-linecap="round"><path d="M22.2 6.6 c-0.4 -2.2 -3.8 -2.6 -5 0.4 c-0.9 2.300 -1.300 6.400 -2.100 10.800 c-0.600 3.500 -1 6.200 -2.300 7.500 c-1.300 1.200 -2.900 0.700 -3.400 -0.500"/><path d="M11.2 13.4 h8.400"/></g></g><text x="38" y="20.04" font-family=""Liberation Sans","Noto Sans CJK SC",sans-serif" font-size="14" fill="#2b2b2b" font-style="italic">读取【6号楼电梯】DT-7_消防_30_127</text><rect x="-5.0" y="10.0" width="10" height="10" rx="2.2" fill="#3a3838" stroke="#777a80" stroke-width="1"/><rect x="297.0" y="10.0" width="10" height="10" rx="2.2" fill="#3a3838" stroke="#777a80" stroke-width="1"/><circle cx="295.5" cy="-2.5" r="5.2" fill="#0fb4f5"/></g>
<g transform="translate(320.00,448.92) scale(0.5717)"><rect x="-25" y="2" width="32" height="26" rx="5" fill="#1b1e2b" stroke="#8b8d94" stroke-width="1.3"/><rect x="-20" y="6" width="16" height="18" rx="4" fill="#a6bbcf"/><rect x="0" y="0" width="101" height="30" rx="5" fill="#a6bbcf" stroke="rgba(0,0,0,0.25)" stroke-width="1"/><path d="M5 0.5 h25 v29 h-25 a4.5 4.5 0 0 1 -4.5 -4.5 v-20 a4.5 4.5 0 0 1 4.5 -4.5 z" fill="rgba(0,0,0,0.05)"/><path d="M30 1 v28" stroke="rgba(0,0,0,0.1)" stroke-width="1"/><g transform="translate(0.0,0)"><g transform="translate(0,0.0)"><rect x="9.5" y="9.6" width="8.6" height="4.2" fill="#fff"/><rect x="9.5" y="16.4" width="8.6" height="4.2" fill="#fff"/><path d="M14.6 4.6 L21.6 15 L14.6 25.4" fill="none" stroke="#fff" stroke-width="1.7"/><path d="M16.2 8.2 L20.6 15 L16.2 21.8 Z" fill="#fff" opacity="0.75"/></g></g><text x="38" y="20.04" font-family=""Liberation Sans","Noto Sans CJK SC",sans-serif" font-size="14" fill="#2b2b2b" font-style="italic">24秒后</text><rect x="96.0" y="10.0" width="10" height="10" rx="2.2" fill="#3a3838" stroke="#777a80" stroke-width="1"/><circle cx="94.5" cy="-2.5" r="5.2" fill="#0fb4f5"/></g>
<g transform="translate(400.00,448.92) scale(0.5717)"><rect x="0" y="0" width="302" height="30" rx="5" fill="#fdd0a2" stroke="rgba(0,0,0,0.25)" stroke-width="1"/><path d="M5 0.5 h25 v29 h-25 a4.5 4.5 0 0 1 -4.5 -4.5 v-20 a4.5 4.5 0 0 1 4.5 -4.5 z" fill="rgba(0,0,0,0.05)"/><path d="M30 1 v28" stroke="rgba(0,0,0,0.1)" stroke-width="1"/><g transform="translate(0.0,0)"><g transform="translate(0,0.0)" fill="none" stroke="#fff" stroke-width="2.2" stroke-linecap="round"><path d="M22.2 6.6 c-0.4 -2.2 -3.8 -2.6 -5 0.4 c-0.9 2.300 -1.300 6.400 -2.100 10.800 c-0.600 3.500 -1 6.200 -2.300 7.500 c-1.300 1.200 -2.900 0.700 -3.400 -0.500"/><path d="M11.2 13.4 h8.400"/></g></g><text x="38" y="20.04" font-family=""Liberation Sans","Noto Sans CJK SC",sans-serif" font-size="14" fill="#2b2b2b" font-style="italic">读取【6号楼电梯】DT-8_消防_30_123</text><rect x="-5.0" y="10.0" width="10" height="10" rx="2.2" fill="#3a3838" stroke="#777a80" stroke-width="1"/><rect x="297.0" y="10.0" width="10" height="10" rx="2.2" fill="#3a3838" stroke="#777a80" stroke-width="1"/><circle cx="295.5" cy="-2.5" r="5.2" fill="#0fb4f5"/></g>
<g transform="translate(320.00,528.82) scale(0.5717)"><rect x="-25" y="2" width="32" height="26" rx="5" fill="#1b1e2b" stroke="#8b8d94" stroke-width="1.3"/><rect x="-20" y="6" width="16" height="18" rx="4" fill="#a6bbcf"/><rect x="0" y="0" width="101" height="30" rx="5" fill="#a6bbcf" stroke="rgba(0,0,0,0.25)" stroke-width="1"/><path d="M5 0.5 h25 v29 h-25 a4.5 4.5 0 0 1 -4.5 -4.5 v-20 a4.5 4.5 0 0 1 4.5 -4.5 z" fill="rgba(0,0,0,0.05)"/><path d="M30 1 v28" stroke="rgba(0,0,0,0.1)" stroke-width="1"/><g transform="translate(0.0,0)"><g transform="translate(0,0.0)"><rect x="9.5" y="9.6" width="8.6" height="4.2" fill="#fff"/><rect x="9.5" y="16.4" width="8.6" height="4.2" fill="#fff"/><path d="M14.6 4.6 L21.6 15 L14.6 25.4" fill="none" stroke="#fff" stroke-width="1.7"/><path d="M16.2 8.2 L20.6 15 L16.2 21.8 Z" fill="#fff" opacity="0.75"/></g></g><text x="38" y="20.04" font-family=""Liberation Sans","Noto Sans CJK SC",sans-serif" font-size="14" fill="#2b2b2b" font-style="italic">27秒后</text><rect x="96.0" y="10.0" width="10" height="10" rx="2.2" fill="#3a3838" stroke="#777a80" stroke-width="1"/><circle cx="94.5" cy="-2.5" r="5.2" fill="#0fb4f5"/></g>
<g transform="translate(400.00,528.82) scale(0.5717)"><rect x="0" y="0" width="320" height="30" rx="5" fill="#fdd0a2" stroke="rgba(0,0,0,0.25)" stroke-width="1"/><path d="M5 0.5 h25 v29 h-25 a4.5 4.5 0 0 1 -4.5 -4.5 v-20 a4.5 4.5 0 0 1 4.5 -4.5 z" fill="rgba(0,0,0,0.05)"/><path d="M30 1 v28" stroke="rgba(0,0,0,0.1)" stroke-width="1"/><g transform="translate(0.0,0)"><g transform="translate(0,0.0)" fill="none" stroke="#fff" stroke-width="2.2" stroke-linecap="round"><path d="M22.2 6.6 c-0.4 -2.2 -3.8 -2.6 -5 0.4 c-0.9 2.300 -1.300 6.400 -2.100 10.800 c-0.600 3.500 -1 6.200 -2.300 7.500 c-1.300 1.200 -2.900 0.700 -3.400 -0.500"/><path d="M11.2 13.4 h8.400"/></g></g><text x="38" y="20.04" font-family=""Liberation Sans","Noto Sans CJK SC",sans-serif" font-size="14" fill="#2b2b2b" font-style="italic">读取【6号楼电梯】 6号电梯东面8F-水表</text><rect x="-5.0" y="10.0" width="10" height="10" rx="2.2" fill="#3a3838" stroke="#777a80" stroke-width="1"/><rect x="315.0" y="10.0" width="10" height="10" rx="2.2" fill="#3a3838" stroke="#777a80" stroke-width="1"/><circle cx="313.5" cy="-2.5" r="5.2" fill="#0fb4f5"/></g>
<g transform="translate(640.00,334.52) scale(0.5717)"><rect x="0" y="0" width="160.5" height="30" rx="5" fill="#1fb9cb" stroke="rgba(0,0,0,0.25)" stroke-width="1"/><g transform="translate(130.5,0)"><circle cx="15" cy="15.0" r="10" fill="#fff"/><text x="15" y="14.5" text-anchor="middle" font-family=""Liberation Sans","Noto Sans CJK SC",sans-serif" font-size="6.5" fill="#2aa9b8">BAC</text><text x="15" y="20.5" text-anchor="middle" font-family=""Liberation Sans","Noto Sans CJK SC",sans-serif" font-size="6.5" fill="#2aa9b8">net</text></g><text x="124" y="20.04" text-anchor="end" font-family=""Liberation Sans","Noto Sans CJK SC",sans-serif" font-size="14" fill="#0d5763">BACnet Read</text><rect x="-5.0" y="10.0" width="10" height="10" rx="2.2" fill="#3a3838" stroke="#777a80" stroke-width="1"/><rect x="155.5" y="10.0" width="10" height="10" rx="2.2" fill="#3a3838" stroke="#777a80" stroke-width="1"/><circle cx="154.0" cy="-2.5" r="5.2" fill="#0fb4f5"/><rect x="8" y="34" width="10.5" height="10.5" rx="2.5" fill="#5cb85c"/><text x="23.5" y="43.2" font-family=""Liberation Sans","Noto Sans CJK SC",sans-serif" font-size="12" fill="#9a9ca3">active</text></g>
<g transform="translate(742.80,334.52) scale(0.5717)"><rect x="0" y="0" width="181" height="30" rx="5" fill="#fdd0a2" stroke="rgba(0,0,0,0.25)" stroke-width="1"/><path d="M5 0.5 h25 v29 h-25 a4.5 4.5 0 0 1 -4.5 -4.5 v-20 a4.5 4.5 0 0 1 4.5 -4.5 z" fill="rgba(0,0,0,0.05)"/><path d="M30 1 v28" stroke="rgba(0,0,0,0.1)" stroke-width="1"/><g transform="translate(0.0,0)"><g transform="translate(0,0.0)" fill="none" stroke="#fff" stroke-width="2.2" stroke-linecap="round"><path d="M22.2 6.6 c-0.4 -2.2 -3.8 -2.6 -5 0.4 c-0.9 2.300 -1.300 6.400 -2.100 10.800 c-0.600 3.500 -1 6.200 -2.300 7.500 c-1.300 1.200 -2.900 0.700 -3.400 -0.500"/><path d="M11.2 13.4 h8.400"/></g></g><text x="38" y="20.04" font-family=""Liberation Sans","Noto Sans CJK SC",sans-serif" font-size="14" fill="#2b2b2b" font-style="italic">处理【6号电梯】</text><rect x="-5.0" y="10.0" width="10" height="10" rx="2.2" fill="#3a3838" stroke="#777a80" stroke-width="1"/><rect x="176.0" y="10.0" width="10" height="10" rx="2.2" fill="#3a3838" stroke="#777a80" stroke-width="1"/><circle cx="174.5" cy="-2.5" r="5.2" fill="#0fb4f5"/></g>
<g transform="translate(742.80,277.52) scale(0.5717)"><rect x="0" y="0" width="101" height="30" rx="5" fill="#d8bfd8" stroke="rgba(0,0,0,0.25)" stroke-width="1"/><path d="M71 0.5 h25 a4.5 4.5 0 0 1 4.5 4.5 v20 a4.5 4.5 0 0 1 -4.5 4.5 h-25 z" fill="rgba(0,0,0,0.05)"/><path d="M71 1 v28" stroke="rgba(0,0,0,0.1)" stroke-width="1"/><g transform="translate(71.0,0)"><g transform="translate(0,0.0)" fill="none" stroke="#fff" stroke-width="1.8" stroke-linecap="round"><path d="M11 11 a6 6 0 0 1 0 8" opacity="0.9"/><path d="M14.5 8 a10 10 0 0 1 0 14"/><path d="M18 5 a14 14 0 0 1 0 20"/></g></g><text x="63" y="20.04" text-anchor="end" font-family=""Liberation Sans","Noto Sans CJK SC",sans-serif" font-size="14" fill="#2b2b2b">mqtt</text><rect x="-5.0" y="10.0" width="10" height="10" rx="2.2" fill="#3a3838" stroke="#777a80" stroke-width="1"/><circle cx="94.5" cy="-2.5" r="5.2" fill="#0fb4f5"/><rect x="9.2" y="35.2" width="8" height="8" rx="2" fill="none" stroke="#f2e935" stroke-width="2.6"/><text x="23.5" y="43.2" font-family=""Liberation Sans","Noto Sans CJK SC",sans-serif" font-size="12" fill="#9a9ca3">连接中</text></g>
<g transform="translate(743.00,380.62) scale(0.5717)"><rect x="93" y="2" width="26" height="26" rx="5" fill="#1b1e2b" stroke="#8b8d94" stroke-width="1.3"/><rect x="96" y="6" width="16" height="18" rx="4" fill="#3c3f3f"/><rect x="0" y="0" width="100" height="30" rx="5" fill="#87a980" stroke="rgba(0,0,0,0.25)" stroke-width="1"/><path d="M70 0.5 h25 a4.5 4.5 0 0 1 4.5 4.5 v20 a4.5 4.5 0 0 1 -4.5 4.5 h-25 z" fill="rgba(0,0,0,0.05)"/><path d="M70 1 v28" stroke="rgba(0,0,0,0.1)" stroke-width="1"/><g transform="translate(70.0,0)"><rect x="9" y="5.00" width="12" height="2.2" fill="#fff"/><rect x="9" y="9.30" width="12" height="2.2" fill="#fff"/><rect x="9" y="13.60" width="12" height="2.2" fill="#fff"/><rect x="9" y="17.90" width="12" height="2.2" fill="#fff"/><rect x="9" y="22.20" width="12" height="2.2" fill="#fff"/></g><text x="62" y="20.04" text-anchor="end" font-family=""Liberation Sans","Noto Sans CJK SC",sans-serif" font-size="14" fill="#2b2b2b" font-style="italic">调试 1</text><rect x="-5.0" y="10.0" width="10" height="10" rx="2.2" fill="#3a3838" stroke="#777a80" stroke-width="1"/><circle cx="93.5" cy="-2.5" r="5.2" fill="#0fb4f5"/></g>
</svg>
<div class="a" style="left:289px;top:665px;width:582px;height:18px;background:#0e0e0f"></div>
<div class="a bd" style="left:289px;top:664.5px;width:582px;height:1px"></div>
<div class="btn" style="left:296px;top:668px;width:14px;height:13px"></div>
<svg class="a" style="left:299px;top:670.5px" width="8" height="8" viewBox="0 0 8 8" fill="none" stroke="#ddd" stroke-width="1.3"><circle cx="3.2" cy="3.2" r="2.4"/><path d="M5 5 L7.4 7.4" stroke-linecap="round"/></svg>
<div class="btn" style="left:807px;top:668px;width:14px;height:13px"></div>
<svg class="a" style="left:809.5px;top:670.5px" width="9" height="8" viewBox="0 0 9 8" fill="none" stroke="#aaa" stroke-width="0.9"><path d="M0.6 1.2 L3 0.6 L6 1.4 L8.4 0.6 V6.8 L6 7.4 L3 6.6 L0.6 7.2 Z M3 0.6 V6.6 M6 1.4 V7.4"/></svg>
<div class="btn" style="left:824px;top:668.5px;width:14px;height:12.5px"></div>
<div class="btn" style="left:837px;top:668.5px;width:14px;height:12.5px"></div>
<div class="btn" style="left:850px;top:668.5px;width:14px;height:12.5px"></div>
<div class="a" style="left:828px;top:674px;width:6px;height:1.5px;background:#ccc"></div>
<div class="a" style="left:840.4px;top:671.3px;width:4.8px;height:4.8px;border:1.2px solid #ccc;border-radius:4px"></div>
<div class="a" style="left:853.8px;top:674px;width:6.4px;height:1.5px;background:#ccc"></div><div class="a" style="left:856.3px;top:671.5px;width:1.5px;height:6.4px;background:#ccc"></div>
<div class="a" style="left:871px;top:78px;width:6.5px;height:606px;background:#0d0e15"></div>
<div class="a bd" style="left:870.5px;top:78px;width:1px;height:606px"></div>
<div class="a" style="left:873.3px;top:361.5px;width:2.4px;height:35px;background:#5c5f6a;border-radius:1px"></div>
<div class="a" style="left:877.2px;top:78px;width:185.29999999999995px;height:606px;background:#12131c"></div>
<div class="a bd" style="left:877.2px;top:78px;width:1px;height:606px"></div>
<div class="a bd" style="left:1061.5px;top:78px;width:1px;height:606px"></div>
<div class="a bd" style="left:877.2px;top:683px;width:185.29999999999995px;height:1px"></div>
<div class="a" style="left:878.2px;top:78px;width:183.29999999999995px;height:25px;background:#181a27"></div>
<div class="a bd" style="left:877.2px;top:103px;width:185.29999999999995px;height:1px"></div>
<div class="a" style="left:879.6px;top:80.5px;width:104.9px;height:23.5px;background:#181a27;border:1px solid #4d505c;border-bottom:none;box-sizing:border-box"></div>
<svg class="a" style="left:889.8px;top:86.5px" width="8" height="9.6" viewBox="0 0 9 10" fill="#aaa"><ellipse cx="4.5" cy="5.6" rx="2.4" ry="3.2"/><circle cx="4.5" cy="2" r="1.4"/><path d="M0.4 3.6 L2.2 4.6 M0 6 H2 M0.4 8.6 L2.2 7.4 M8.6 3.6 L6.8 4.6 M9 6 H7 M8.6 8.6 L6.8 7.4" stroke="#aaa" stroke-width="0.8"/></svg>
<div class="a" style="left:902.5px;top:85.2px;font-size:9.7px;line-height:14px;color:#fff;font-weight:700">调试窗口</div>
<div class="btn" style="left:991.5px;top:81.5px;width:20px;height:20px"></div>
<div class="a" style="left:991.5px;top:84px;width:20px;text-align:center;font-family:'Liberation Serif',serif;font-weight:700;font-size:11.5px;line-height:14px;color:#ddd">i</div>
<div class="btn" style="left:1016px;top:81.5px;width:20px;height:20px"></div>
<svg class="a" style="left:1021px;top:86.5px" width="10" height="10" viewBox="0 0 10 10" fill="#ccc"><path d="M3.2 0.8 H9.4 L7.6 7 H1.6 Z"/><path d="M1.4 7.6 H7.8 L7.6 9.2 H1.6 A0.9 0.9 0 0 1 1.4 7.6 Z"/><path d="M4 2.4 H8 M3.6 3.8 H7.6" stroke="#181b28" stroke-width="0.7"/></svg>
<svg class="a" style="left:1046.5px;top:89px" width="7" height="5" viewBox="0 0 7 5"><path d="M0.2 0.6 H6.8 L3.5 4.4 Z" fill="#ccc"/></svg>
<div class="a" style="left:878.2px;top:104px;width:183.29999999999995px;height:29px;background:#0e0e0f"></div>
<div class="a bd" style="left:877.2px;top:133px;width:185.29999999999995px;height:1px"></div>
<div class="btn" style="left:919px;top:109.3px;width:69.5px;height:17.4px"></div>
<svg class="a" style="left:926px;top:114px" width="8" height="8" viewBox="0 0 8 8"><path d="M0.3 0.6 H7.7 L4.8 4 V7.6 L3.2 6.4 V4 Z" fill="#bbb"/></svg>
<div class="a" style="left:935.8px;top:111.7px;font-size:9.1px;line-height:14px;color:#b4b6bd">所有节点</div>
<svg class="a" style="left:978px;top:116.2px" width="6" height="4" viewBox="0 0 6 4"><path d="M0.2 0.4 H5.8 L3 3.6 Z" fill="#bbb"/></svg>
<div class="btn" style="left:995.5px;top:109.3px;width:52.5px;height:17.4px"></div>
<svg class="a" style="left:1002px;top:113.5px" width="7" height="9" viewBox="0 0 7 9" fill="#bbb"><rect x="0" y="1.4" width="7" height="1"/><rect x="2.2" y="0.2" width="2.6" height="1.2"/><path d="M0.7 3 H6.3 V8.6 H0.7 Z"/></svg>
<div class="a" style="left:1011.8px;top:111.7px;font-size:9.1px;line-height:14px;color:#b4b6bd">所有</div>
<svg class="a" style="left:1037px;top:116.2px" width="6" height="4" viewBox="0 0 6 4"><path d="M0.2 0.4 H5.8 L3 3.6 Z" fill="#bbb"/></svg>
<div class="a" style="left:878.2px;top:134px;width:183.29999999999995px;height:531px;overflow:hidden">
<div class="msg" style="left:5.7999999999999545px;top:-0.4px"><span class="t">2024/7/23 18:26:49</span><span class="n">节点: a1a7ebc132297118</span><span class="p">v1/devices/me/telemetry : msg.payload : Object</span><span class="l1"><svg width="5" height="7" viewBox="0 0 5 7" style="margin-right:2.6px"><path d="M0.6 0.6 L4.4 3.5 L0.6 6.4 Z" fill="#ccc"/></svg>{ <span class="k">CurrentHumidity</span>: <span class="s">"46.10"</span>,</span><span class="l2"><span class="k">CurrentTemperature</span>: <span class="s">"20.59"</span> }</span></div>
<div class="a" style="left:5.7999999999999545px;top:62.6px;width:171px;height:1px;background:#222534"></div>
<div class="msg" style="left:5.7999999999999545px;top:63.0px"><span class="t">2024/7/23 18:26:51</span><span class="n">节点: a1a7ebc132297118</span><span class="p">v1/devices/me/telemetry : msg.payload : Object</span><span class="l1"><svg width="5" height="7" viewBox="0 0 5 7" style="margin-right:2.6px"><path d="M0.6 0.6 L4.4 3.5 L0.6 6.4 Z" fill="#ccc"/></svg>{ <span class="k">CurrentHumidity</span>: <span class="s">"45.59"</span>,</span><span class="l2"><span class="k">CurrentTemperature</span>: <span class="s">"16.24"</span> }</span></div>
<div class="a" style="left:5.7999999999999545px;top:126.0px;width:171px;height:1px;background:#222534"></div>
<div class="msg" style="left:5.7999999999999545px;top:126.4px"><span class="t">2024/7/23 18:26:53</span><span class="n">节点: a1a7ebc132297118</span><span class="p">v1/devices/me/telemetry : msg.payload : Object</span><span class="l1"><svg width="5" height="7" viewBox="0 0 5 7" style="margin-right:2.6px"><path d="M0.6 0.6 L4.4 3.5 L0.6 6.4 Z" fill="#ccc"/></svg>{ <span class="k">CurrentHumidity</span>: <span class="s">"56.56"</span>,</span><span class="l2"><span class="k">CurrentTemperature</span>: <span class="s">"20.99"</span> }</span></div>
<div class="a" style="left:5.7999999999999545px;top:189.4px;width:171px;height:1px;background:#222534"></div>
<div class="msg" style="left:5.7999999999999545px;top:189.8px"><span class="t">2024/7/23 18:26:55</span><span class="n">节点: a1a7ebc132297118</span><span class="p">v1/devices/me/telemetry : msg.payload : Object</span><span class="l1"><svg width="5" height="7" viewBox="0 0 5 7" style="margin-right:2.6px"><path d="M0.6 0.6 L4.4 3.5 L0.6 6.4 Z" fill="#ccc"/></svg>{ <span class="k">CurrentHumidity</span>: <span class="s">"44.19"</span>,</span><span class="l2"><span class="k">CurrentTemperature</span>: <span class="s">"16.87"</span> }</span></div>
<div class="a" style="left:5.7999999999999545px;top:252.8px;width:171px;height:1px;background:#222534"></div>
<div class="msg" style="left:5.7999999999999545px;top:253.2px"><span class="t">2024/7/23 18:26:57</span><span class="n">节点: a1a7ebc132297118</span><span class="p">v1/devices/me/telemetry : msg.payload : Object</span><span class="l1"><svg width="5" height="7" viewBox="0 0 5 7" style="margin-right:2.6px"><path d="M0.6 0.6 L4.4 3.5 L0.6 6.4 Z" fill="#ccc"/></svg>{ <span class="k">CurrentHumidity</span>: <span class="s">"49.77"</span>,</span><span class="l2"><span class="k">CurrentTemperature</span>: <span class="s">"19.76"</span> }</span></div>
<div class="a" style="left:5.7999999999999545px;top:316.2px;width:171px;height:1px;background:#222534"></div>
<div class="msg" style="left:5.7999999999999545px;top:316.6px"><span class="t">2024/7/23 18:26:59</span><span class="n">节点: a1a7ebc132297118</span><span class="p">v1/devices/me/telemetry : msg.payload : Object</span><span class="l1"><svg width="5" height="7" viewBox="0 0 5 7" style="margin-right:2.6px"><path d="M0.6 0.6 L4.4 3.5 L0.6 6.4 Z" fill="#ccc"/></svg>{ <span class="k">CurrentHumidity</span>: <span class="s">"54.75"</span>,</span><span class="l2"><span class="k">CurrentTemperature</span>: <span class="s">"24.64"</span> }</span></div>
<div class="a" style="left:5.7999999999999545px;top:379.6px;width:171px;height:1px;background:#222534"></div>
<div class="msg" style="left:5.7999999999999545px;top:380.0px"><span class="t">2024/7/23 18:27:01</span><span class="n">节点: a1a7ebc132297118</span><span class="p">v1/devices/me/telemetry : msg.payload : Object</span><span class="l1"><svg width="5" height="7" viewBox="0 0 5 7" style="margin-right:2.6px"><path d="M0.6 0.6 L4.4 3.5 L0.6 6.4 Z" fill="#ccc"/></svg>{ <span class="k">CurrentHumidity</span>: <span class="s">"45.74"</span>,</span><span class="l2"><span class="k">CurrentTemperature</span>: <span class="s">"16.79"</span> }</span></div>
<div class="a" style="left:5.7999999999999545px;top:443.0px;width:171px;height:1px;background:#222534"></div>
<div class="msg" style="left:5.7999999999999545px;top:443.4px"><span class="t">2024/7/23 18:27:03</span><span class="n">节点: a1a7ebc132297118</span><span class="p">v1/devices/me/telemetry : msg.payload : Object</span><span class="l1"><svg width="5" height="7" viewBox="0 0 5 7" style="margin-right:2.6px"><path d="M0.6 0.6 L4.4 3.5 L0.6 6.4 Z" fill="#ccc"/></svg>{ <span class="k">CurrentHumidity</span>: <span class="s">"52.22"</span>,</span><span class="l2"><span class="k">CurrentTemperature</span>: <span class="s">"16.09"</span> }</span></div>
<div class="a" style="left:5.7999999999999545px;top:506.4px;width:171px;height:1px;background:#222534"></div>
<div class="msg" style="left:5.7999999999999545px;top:506.8px"><span class="t">2024/7/23 18:27:05</span><span class="n">节点: a1a7ebc132297118</span><span class="p">v1/devices/me/telemetry : msg.payload : Object</span><span class="l1"><svg width="5" height="7" viewBox="0 0 5 7" style="margin-right:2.6px"><path d="M0.6 0.6 L4.4 3.5 L0.6 6.4 Z" fill="#ccc"/></svg>{ <span class="k">CurrentHumidity</span>: <span class="s">"48.31"</span>,</span><span class="l2"><span class="k">CurrentTemperature</span>: <span class="s">"18.42"</span> }</span></div>
<div class="a" style="left:5.7999999999999545px;top:569.8px;width:171px;height:1px;background:#222534"></div>
</div>
<div class="a" style="left:878.2px;top:665px;width:183.29999999999995px;height:18px;background:#0e0e0f"></div>
<div class="a bd" style="left:877.2px;top:664.5px;width:185.29999999999995px;height:1px"></div>
<div class="btn" style="left:1044px;top:668px;width:14.5px;height:13px"></div>
<svg class="a" style="left:1046.7px;top:670.5px" width="9" height="8" viewBox="0 0 9 8"><rect x="0.6" y="0.6" width="7.8" height="5" fill="none" stroke="#bbb" stroke-width="1"/><rect x="2.6" y="6.6" width="3.8" height="1" fill="#bbb"/></svg>
<svg class="a" style="left:748.4px;top:638.6px" width="42.4" height="35.7" viewBox="0 0 44 37"><g fill="#c6c6c8" opacity="0.86"><path d="M16.5 1 C7.6 1 0.6 6.8 0.6 14 c0 4 2.2 7.5 5.6 9.9 l-1.6 4.9 l5.7 -3 c1.9 0.6 4 0.9 6.2 0.9 c0.5 0 1 0 1.5 -0.1 c-0.4 -1.1 -0.6 -2.3 -0.6 -3.500 c0 -6.700 6.400 -12.100 14.300 -12.100 c0.5 0 1 0 1.400 0.100 C31.400 5.400 24.600 1 16.500 1 z"/><path d="M43.400 23.400 c0 -5.900 -5.800 -10.700 -12.900 -10.700 s-12.900 4.800 -12.900 10.700 s5.800 10.700 12.900 10.700 c1.600 0 3.100 -0.200 4.500 -0.700 l4.500 2.500 l-1.300 -4 c3.200 -2 5.200 -5 5.200 -8.500 z"/></g><g fill="#181b28"><circle cx="11" cy="10" r="2"/><circle cx="21.500" cy="10" r="2"/><circle cx="26.300" cy="20.500" r="1.700"/><circle cx="34.800" cy="20.500" r="1.700"/></g></svg>
<div class="a" style="left:798.2px;top:637.3px;font-size:31px;line-height:44px;color:rgba(208,208,208,0.69);white-space:nowrap;font-weight:400;font-family:'Liberation Sans','Noto Sans CJK SC',sans-serif">公众号<span style="display:inline-block;width:33.6px;text-align:center;font-size:22px;line-height:0;position:relative;top:-2.7px;left:-1px;font-weight:700;font-family:'Noto Sans CJK SC',sans-serif"> · </span>独数易智</div>
</div></body></html>
